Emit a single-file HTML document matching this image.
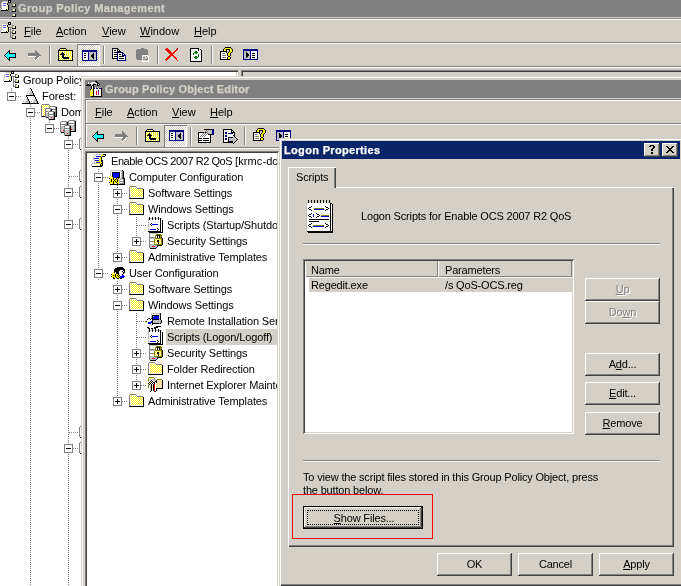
<!DOCTYPE html>
<html><head><meta charset="utf-8">
<style>
*{box-sizing:border-box}
html,body{margin:0;padding:0}
body{width:681px;height:586px;overflow:hidden;position:relative;background:#D4D0C8;font-family:"Liberation Sans",sans-serif;font-size:11px;color:#000}
.a{position:absolute}
.t{position:absolute;white-space:nowrap;line-height:13px;will-change:transform}
.u{text-decoration:underline;text-underline-offset:1px}
.btn{position:absolute;will-change:transform;background:#D4D0C8;box-shadow:inset -1px -1px #404040,inset 1px 1px #fff,inset -2px -2px #808080;text-align:center;line-height:22px;letter-spacing:-0.17px}
.sunk{position:absolute;box-shadow:inset 1px 1px #808080,inset -1px -1px #fff,inset 2px 2px #404040,inset -2px -2px #D4D0C8}
.dis{color:#808080;text-shadow:1px 1px #fff}
.hl{position:absolute;height:1px;background:#808080}
.wl{position:absolute;height:1px;background:#fff}
.dots{position:absolute;background-image:linear-gradient(90deg,#808080 50%,transparent 50%);background-size:2px 1px;height:1px}
.vdots{position:absolute;background-image:linear-gradient(180deg,#808080 50%,transparent 50%);background-size:1px 2px;width:1px}
.box{position:absolute;width:9px;height:9px;border:1px solid #808080;background:#fff}
.box:before{content:"";position:absolute;left:1px;top:3px;width:5px;height:1px;background:#000}
.box.p:after{content:"";position:absolute;left:3px;top:1px;width:1px;height:5px;background:#000}
.vsep{position:absolute;width:2px;border-left:1px solid #808080;border-right:1px solid #fff}
.d{letter-spacing:-0.17px}
.tr .t,.trt{letter-spacing:-0.12px}
svg{position:absolute;shape-rendering:crispEdges}
</style></head><body>

<!-- ===== GPMC background window ===== -->
<div class="a" style="left:0;top:0;width:681px;height:17px;background:#808080"></div>
<div class="t" style="left:18px;top:2px;color:#D4D0C8;font-weight:bold;letter-spacing:0.36px;-webkit-text-stroke:0.25px #D4D0C8">Group Policy Management</div>
<svg style="left:0px;top:0px" width="17" height="17"><path fill="#000000" d="M8 0h3v1h-3zM8 1h1v1h-1zM10 1h1v1h-1zM8 2h3v1h-3zM7 3h1v1h-1zM7 4h1v1h-1zM15 4h1v1h-1zM8 5h1v1h-1zM15 5h1v1h-1zM8 6h1v1h-1zM12 6h4v1h-4zM8 7h1v1h-1zM8 8h1v1h-1zM6 9h1v1h-1zM8 9h1v1h-1zM15 9h1v1h-1zM1 10h7v1h-7zM15 10h1v1h-1zM12 11h4v1h-4zM15 14h1v1h-1zM15 15h1v1h-1zM12 16h4v1h-4z"/><path fill="#C0C0C0" d="M3 1h5v1h-5zM1 3h1v1h-1zM1 4h1v1h-1zM1 5h1v1h-1zM1 6h1v1h-1zM1 7h1v1h-1zM0 8h1v1h-1zM0 9h1v1h-1z"/><path fill="#FFFFFF" d="M9 1h1v1h-1zM2 2h4v1h-4zM2 3h1v1h-1zM2 4h4v1h-4zM2 5h1v1h-1zM2 6h4v1h-4zM2 7h4v1h-4zM2 8h4v1h-4zM1 9h5v1h-5z"/><path fill="#F0F0B0" d="M6 2h2v1h-2zM6 3h1v1h-1zM6 4h1v1h-1zM13 4h2v1h-2zM6 5h2v1h-2zM13 5h2v1h-2zM6 6h2v1h-2zM6 7h2v1h-2zM6 8h2v1h-2zM7 9h1v1h-1zM13 9h2v1h-2zM13 10h2v1h-2zM13 14h2v1h-2zM13 15h2v1h-2z"/><path fill="#6060F0" d="M3 3h3v1h-3zM3 5h3v1h-3z"/><path fill="#808080" d="M12 3h2v1h-2zM12 4h1v1h-1zM9 5h4v1h-4zM10 6h1v1h-1zM10 7h1v1h-1zM10 8h1v1h-1zM12 8h2v1h-2zM10 9h1v1h-1zM12 9h1v1h-1zM10 10h3v1h-3zM10 11h1v1h-1zM10 12h1v1h-1zM10 13h1v1h-1zM12 13h2v1h-2zM10 14h1v1h-1zM12 14h1v1h-1zM10 15h3v1h-3z"/></svg>
<div class="hl" style="left:0;top:18px;width:681px"></div>
<div class="wl" style="left:0;top:19px;width:681px"></div>
<div class="hl" style="left:0;top:42px;width:681px"></div>
<div class="wl" style="left:0;top:43px;width:681px"></div>
<div class="hl" style="left:0;top:66px;width:681px"></div>
<div class="wl" style="left:0;top:67px;width:681px"></div>

<!-- GPMC menu -->
<svg style="left:0px;top:22px" width="17" height="17"><path fill="#000000" d="M8 0h3v1h-3zM8 1h1v1h-1zM10 1h1v1h-1zM8 2h3v1h-3zM7 3h1v1h-1zM7 4h1v1h-1zM15 4h1v1h-1zM8 5h1v1h-1zM15 5h1v1h-1zM8 6h1v1h-1zM12 6h4v1h-4zM8 7h1v1h-1zM8 8h1v1h-1zM6 9h1v1h-1zM8 9h1v1h-1zM15 9h1v1h-1zM1 10h7v1h-7zM15 10h1v1h-1zM12 11h4v1h-4zM15 14h1v1h-1zM15 15h1v1h-1zM12 16h4v1h-4z"/><path fill="#C0C0C0" d="M3 1h5v1h-5zM1 3h1v1h-1zM1 4h1v1h-1zM1 5h1v1h-1zM1 6h1v1h-1zM1 7h1v1h-1zM0 8h1v1h-1zM0 9h1v1h-1z"/><path fill="#FFFFFF" d="M9 1h1v1h-1zM2 2h4v1h-4zM2 3h1v1h-1zM2 4h4v1h-4zM2 5h1v1h-1zM2 6h4v1h-4zM2 7h4v1h-4zM2 8h4v1h-4zM1 9h5v1h-5z"/><path fill="#F0F0B0" d="M6 2h2v1h-2zM6 3h1v1h-1zM6 4h1v1h-1zM13 4h2v1h-2zM6 5h2v1h-2zM13 5h2v1h-2zM6 6h2v1h-2zM6 7h2v1h-2zM6 8h2v1h-2zM7 9h1v1h-1zM13 9h2v1h-2zM13 10h2v1h-2zM13 14h2v1h-2zM13 15h2v1h-2z"/><path fill="#6060F0" d="M3 3h3v1h-3zM3 5h3v1h-3z"/><path fill="#808080" d="M12 3h2v1h-2zM12 4h1v1h-1zM9 5h4v1h-4zM10 6h1v1h-1zM10 7h1v1h-1zM10 8h1v1h-1zM12 8h2v1h-2zM10 9h1v1h-1zM12 9h1v1h-1zM10 10h3v1h-3zM10 11h1v1h-1zM10 12h1v1h-1zM10 13h1v1h-1zM12 13h2v1h-2zM10 14h1v1h-1zM12 14h1v1h-1zM10 15h3v1h-3z"/></svg>
<div class="t" style="left:24px;top:25px"><span class="u">F</span>ile</div>
<div class="t" style="left:56px;top:25px"><span class="u">A</span>ction</div>
<div class="t" style="left:102px;top:25px"><span class="u">V</span>iew</div>
<div class="t" style="left:140px;top:25px"><span class="u">W</span>indow</div>
<div class="t" style="left:194px;top:25px"><span class="u">H</span>elp</div>

<!-- GPMC toolbar -->
<div class="vsep" style="left:49px;top:46px;height:18px"></div>
<div class="vsep" style="left:103px;top:46px;height:18px"></div>
<div class="vsep" style="left:157px;top:46px;height:18px"></div>
<div class="vsep" style="left:211px;top:46px;height:18px"></div>
<div class="a" style="left:77px;top:44px;width:23px;height:22px;box-shadow:inset 1px 1px #808080,inset -1px -1px #fff;background-color:#fff;background-image:linear-gradient(45deg,#D4D0C8 25%,transparent 25%,transparent 75%,#D4D0C8 75%),linear-gradient(45deg,#D4D0C8 25%,transparent 25%,transparent 75%,#D4D0C8 75%);background-size:2px 2px;background-position:0 0,1px 1px"></div>

<svg style="left:4px;top:50px" width="13" height="11"><path fill="#000000" d="M5 0h1v1h-1zM4 1h2v1h-2zM3 2h1v1h-1zM5 2h1v1h-1zM2 3h1v1h-1zM5 3h7v1h-7zM1 4h1v1h-1zM11 4h1v1h-1zM0 5h1v1h-1zM11 5h1v1h-1zM1 6h1v1h-1zM11 6h1v1h-1zM2 7h1v1h-1zM5 7h7v1h-7zM3 8h1v1h-1zM5 8h1v1h-1zM4 9h2v1h-2zM5 10h1v1h-1z"/><path fill="#00FFFF" d="M4 2h1v1h-1zM3 3h2v1h-2zM2 4h9v1h-9zM1 5h10v1h-10zM2 6h9v1h-9zM3 7h2v1h-2zM4 8h1v1h-1z"/></svg><svg style="left:28px;top:50px" width="13" height="11"><path fill="#808080" d="M7 0h1v1h-1zM7 1h2v1h-2zM7 2h3v1h-3zM0 3h11v1h-11zM0 4h12v1h-12zM0 5h13v1h-13zM8 6h3v1h-3zM7 7h3v1h-3zM7 8h2v1h-2zM7 9h1v1h-1z"/><path fill="#FFFFFF" d="M0 6h8v1h-8zM11 6h1v1h-1zM10 7h1v1h-1zM9 8h1v1h-1zM8 9h1v1h-1zM7 10h1v1h-1z"/></svg><svg style="left:58px;top:48px" width="15" height="13"><path fill="#000000" d="M2 0h6v1h-6zM1 1h1v1h-1zM8 1h1v1h-1zM0 2h15v1h-15zM0 3h1v1h-1zM14 3h1v1h-1zM0 4h1v1h-1zM4 4h1v1h-1zM14 4h1v1h-1zM0 5h1v1h-1zM3 5h3v1h-3zM14 5h1v1h-1zM0 6h1v1h-1zM2 6h5v1h-5zM14 6h1v1h-1zM0 7h1v1h-1zM4 7h2v1h-2zM14 7h1v1h-1zM0 8h1v1h-1zM4 8h2v1h-2zM14 8h1v1h-1zM0 9h1v1h-1zM4 9h7v1h-7zM14 9h1v1h-1zM0 10h1v1h-1zM5 10h6v1h-6zM14 10h1v1h-1zM0 11h1v1h-1zM14 11h1v1h-1zM0 12h15v1h-15z"/><path fill="#FFFFFF" d="M2 1h1v1h-1zM4 1h1v1h-1zM6 1h1v1h-1zM1 3h1v1h-1zM3 3h1v1h-1zM5 3h1v1h-1zM7 3h1v1h-1zM9 3h1v1h-1zM11 3h1v1h-1zM13 3h1v1h-1zM2 4h1v1h-1zM5 4h1v1h-1zM7 4h1v1h-1zM9 4h1v1h-1zM11 4h1v1h-1zM13 4h1v1h-1zM1 5h1v1h-1zM7 5h1v1h-1zM9 5h1v1h-1zM11 5h1v1h-1zM13 5h1v1h-1zM7 6h1v1h-1zM9 6h1v1h-1zM11 6h1v1h-1zM13 6h1v1h-1zM1 7h1v1h-1zM3 7h1v1h-1zM7 7h1v1h-1zM9 7h1v1h-1zM11 7h1v1h-1zM13 7h1v1h-1zM2 8h1v1h-1zM6 8h1v1h-1zM8 8h1v1h-1zM10 8h1v1h-1zM12 8h1v1h-1zM1 9h1v1h-1zM3 9h1v1h-1zM12 9h1v1h-1zM2 10h1v1h-1zM4 10h1v1h-1zM11 10h1v1h-1zM13 10h1v1h-1zM1 11h1v1h-1zM3 11h1v1h-1zM5 11h1v1h-1zM7 11h1v1h-1zM9 11h1v1h-1zM11 11h1v1h-1zM13 11h1v1h-1z"/><path fill="#FFFF00" d="M3 1h1v1h-1zM5 1h1v1h-1zM7 1h1v1h-1zM2 3h1v1h-1zM4 3h1v1h-1zM6 3h1v1h-1zM8 3h1v1h-1zM10 3h1v1h-1zM12 3h1v1h-1zM1 4h1v1h-1zM3 4h1v1h-1zM6 4h1v1h-1zM8 4h1v1h-1zM10 4h1v1h-1zM12 4h1v1h-1zM2 5h1v1h-1zM6 5h1v1h-1zM8 5h1v1h-1zM10 5h1v1h-1zM12 5h1v1h-1zM1 6h1v1h-1zM8 6h1v1h-1zM10 6h1v1h-1zM12 6h1v1h-1zM2 7h1v1h-1zM6 7h1v1h-1zM8 7h1v1h-1zM10 7h1v1h-1zM12 7h1v1h-1zM1 8h1v1h-1zM3 8h1v1h-1zM7 8h1v1h-1zM9 8h1v1h-1zM11 8h1v1h-1zM13 8h1v1h-1zM2 9h1v1h-1zM11 9h1v1h-1zM13 9h1v1h-1zM1 10h1v1h-1zM3 10h1v1h-1zM12 10h1v1h-1zM2 11h1v1h-1zM4 11h1v1h-1zM6 11h1v1h-1zM8 11h1v1h-1zM10 11h1v1h-1zM12 11h1v1h-1z"/></svg><svg style="left:82px;top:50px" width="15" height="11"><path fill="#000080" d="M0 0h15v1h-15zM0 1h15v1h-15zM0 2h1v1h-1zM6 2h1v1h-1zM14 2h1v1h-1zM0 3h1v1h-1zM6 3h1v1h-1zM14 3h1v1h-1zM0 4h1v1h-1zM6 4h1v1h-1zM14 4h1v1h-1zM0 5h1v1h-1zM6 5h1v1h-1zM14 5h1v1h-1zM0 6h1v1h-1zM6 6h1v1h-1zM14 6h1v1h-1zM0 7h1v1h-1zM6 7h1v1h-1zM14 7h1v1h-1zM0 8h1v1h-1zM6 8h1v1h-1zM14 8h1v1h-1zM0 9h1v1h-1zM6 9h1v1h-1zM14 9h1v1h-1zM0 10h15v1h-15z"/><path fill="#FFFFFF" d="M1 2h5v1h-5zM1 3h1v1h-1zM4 3h2v1h-2zM1 4h5v1h-5zM1 5h1v1h-1zM4 5h2v1h-2zM1 6h5v1h-5zM1 7h1v1h-1zM4 7h2v1h-2zM1 8h5v1h-5zM1 9h5v1h-5z"/><path fill="#C0C0C0" d="M7 2h7v1h-7zM7 3h4v1h-4zM12 3h2v1h-2zM7 4h3v1h-3zM12 4h2v1h-2zM7 5h2v1h-2zM12 5h2v1h-2zM7 6h2v1h-2zM12 6h2v1h-2zM7 7h3v1h-3zM12 7h2v1h-2zM7 8h4v1h-4zM12 8h2v1h-2zM7 9h7v1h-7z"/><path fill="#000000" d="M2 3h2v1h-2zM11 3h1v1h-1zM10 4h2v1h-2zM2 5h2v1h-2zM9 5h3v1h-3zM9 6h3v1h-3zM2 7h2v1h-2zM10 7h2v1h-2zM11 8h1v1h-1z"/></svg>
<svg style="left:112px;top:48px" width="15" height="13"><path fill="#000000" d="M0 0h6v1h-6zM0 1h1v1h-1zM5 1h2v1h-2zM0 2h1v1h-1zM2 2h2v1h-2zM5 2h1v1h-1zM7 2h1v1h-1zM0 3h1v1h-1zM5 3h4v1h-4zM0 4h1v1h-1zM2 4h3v1h-3zM0 5h1v1h-1zM0 6h1v1h-1zM2 6h3v1h-3zM7 6h2v1h-2zM0 7h1v1h-1zM0 8h1v1h-1zM2 8h3v1h-3zM7 8h5v1h-5zM0 9h1v1h-1zM0 10h5v1h-5zM7 10h5v1h-5z"/><path fill="#FFFFFF" d="M1 1h4v1h-4zM1 2h1v1h-1zM4 2h1v1h-1zM6 2h1v1h-1zM1 3h4v1h-4zM1 4h1v1h-1zM1 5h4v1h-4zM6 5h4v1h-4zM1 6h1v1h-1zM6 6h1v1h-1zM9 6h1v1h-1zM11 6h1v1h-1zM1 7h4v1h-4zM6 7h4v1h-4zM1 8h1v1h-1zM6 8h1v1h-1zM12 8h1v1h-1zM1 9h4v1h-4zM6 9h7v1h-7zM6 10h1v1h-1zM12 10h1v1h-1zM6 11h7v1h-7z"/><path fill="#000080" d="M5 4h6v1h-6zM5 5h1v1h-1zM10 5h2v1h-2zM5 6h1v1h-1zM10 6h1v1h-1zM12 6h1v1h-1zM5 7h1v1h-1zM10 7h4v1h-4zM5 8h1v1h-1zM13 8h1v1h-1zM5 9h1v1h-1zM13 9h1v1h-1zM5 10h1v1h-1zM13 10h1v1h-1zM5 11h1v1h-1zM13 11h1v1h-1zM5 12h9v1h-9z"/></svg><svg style="left:135px;top:48px" width="15" height="14"><path fill="#808080" d="M6 0h3v1h-3zM2 1h10v1h-10zM1 2h12v1h-12zM1 3h12v1h-12zM1 4h12v1h-12zM1 5h12v1h-12zM1 6h12v1h-12zM1 7h6v1h-6zM1 8h6v1h-6zM11 8h1v1h-1zM1 9h6v1h-6zM8 9h2v1h-2zM12 9h1v1h-1zM1 10h6v1h-6zM12 10h1v1h-1zM2 11h5v1h-5zM8 11h5v1h-5z"/><path fill="#FFFFFF" d="M7 7h6v1h-6zM7 8h1v1h-1zM12 8h2v1h-2zM7 9h1v1h-1zM13 9h1v1h-1zM7 10h1v1h-1zM13 10h1v1h-1zM7 11h1v1h-1zM13 11h1v1h-1zM7 12h1v1h-1zM13 12h1v1h-1zM7 13h7v1h-7z"/><path fill="#D4D0C8" d="M8 8h3v1h-3zM10 9h2v1h-2zM8 10h4v1h-4zM8 12h5v1h-5z"/></svg><svg style="left:165px;top:48px" width="14" height="14"><path fill="#FF0000" d="M1 0h2v1h-2zM12 0h1v1h-1zM0 1h4v1h-4zM11 1h2v1h-2zM1 2h4v1h-4zM10 2h2v1h-2zM2 3h4v1h-4zM9 3h2v1h-2zM3 4h4v1h-4zM8 4h2v1h-2zM4 5h5v1h-5zM5 6h3v1h-3zM4 7h5v1h-5zM3 8h3v1h-3zM8 8h2v1h-2zM2 9h3v1h-3zM9 9h2v1h-2zM1 10h3v1h-3zM10 10h2v1h-2zM0 11h3v1h-3zM11 11h1v1h-1zM1 12h1v1h-1zM12 12h1v1h-1z"/></svg><svg style="left:190px;top:48px" width="12" height="14"><path fill="#000000" d="M0 0h9v1h-9zM0 1h1v1h-1zM8 1h1v1h-1zM10 1h1v1h-1zM0 2h1v1h-1zM8 2h1v1h-1zM11 2h1v1h-1zM0 3h1v1h-1zM11 3h1v1h-1zM0 4h1v1h-1zM11 4h1v1h-1zM0 5h1v1h-1zM11 5h1v1h-1zM0 6h1v1h-1zM11 6h1v1h-1zM0 7h1v1h-1zM11 7h1v1h-1zM0 8h1v1h-1zM11 8h1v1h-1zM0 9h1v1h-1zM11 9h1v1h-1zM0 10h1v1h-1zM11 10h1v1h-1zM0 11h1v1h-1zM11 11h1v1h-1zM0 12h1v1h-1zM11 12h1v1h-1zM0 13h12v1h-12z"/><path fill="#FFFFFF" d="M1 1h7v1h-7zM9 1h1v1h-1zM1 2h7v1h-7zM9 2h2v1h-2zM1 3h4v1h-4zM7 3h4v1h-4zM1 4h3v1h-3zM8 4h3v1h-3zM1 5h2v1h-2zM4 5h1v1h-1zM7 5h4v1h-4zM1 6h2v1h-2zM4 6h4v1h-4zM9 6h2v1h-2zM1 7h7v1h-7zM9 7h2v1h-2zM1 8h4v1h-4zM7 8h1v1h-1zM9 8h2v1h-2zM1 9h3v1h-3zM8 9h3v1h-3zM1 10h4v1h-4zM7 10h4v1h-4zM1 11h10v1h-10zM1 12h10v1h-10z"/><path fill="#008000" d="M5 3h2v1h-2zM4 4h4v1h-4zM3 5h1v1h-1zM5 5h2v1h-2zM3 6h1v1h-1zM8 6h1v1h-1zM8 7h1v1h-1zM5 8h2v1h-2zM8 8h1v1h-1zM4 9h4v1h-4zM5 10h2v1h-2z"/></svg><svg style="left:220px;top:47px" width="15" height="13"><path fill="#000000" d="M5 0h6v1h-6zM4 1h1v1h-1zM11 1h1v1h-1zM3 2h1v1h-1zM6 2h4v1h-4zM12 2h1v1h-1zM3 3h1v1h-1zM6 3h1v1h-1zM9 3h1v1h-1zM12 3h1v1h-1zM0 4h7v1h-7zM9 4h1v1h-1zM12 4h1v1h-1zM0 5h1v1h-1zM6 5h1v1h-1zM8 5h1v1h-1zM11 5h1v1h-1zM0 6h1v1h-1zM7 6h1v1h-1zM10 6h1v1h-1zM0 7h1v1h-1zM7 7h1v1h-1zM10 7h1v1h-1zM0 8h1v1h-1zM7 8h1v1h-1zM10 8h1v1h-1zM0 9h1v1h-1zM8 9h2v1h-2zM0 10h1v1h-1zM7 10h1v1h-1zM10 10h1v1h-1zM0 11h1v1h-1zM7 11h1v1h-1zM10 11h1v1h-1zM0 12h10v1h-10z"/><path fill="#FFFF00" d="M5 1h6v1h-6zM4 2h2v1h-2zM10 2h2v1h-2zM4 3h2v1h-2zM10 3h2v1h-2zM10 4h2v1h-2zM9 5h2v1h-2zM8 6h2v1h-2zM8 7h2v1h-2zM8 8h2v1h-2zM8 10h2v1h-2zM8 11h2v1h-2z"/><path fill="#FFFFFF" d="M1 5h5v1h-5zM1 6h1v1h-1zM5 6h2v1h-2zM1 7h6v1h-6zM1 8h1v1h-1zM6 8h1v1h-1zM1 9h7v1h-7zM1 10h1v1h-1zM6 10h1v1h-1zM1 11h6v1h-6z"/><path fill="#808080" d="M2 6h3v1h-3zM2 8h4v1h-4zM2 10h4v1h-4z"/></svg><svg style="left:243px;top:49px" width="15" height="11"><path fill="#000080" d="M0 0h15v1h-15zM0 1h15v1h-15zM0 2h1v1h-1zM7 2h1v1h-1zM14 2h1v1h-1zM0 3h1v1h-1zM7 3h1v1h-1zM14 3h1v1h-1zM0 4h1v1h-1zM7 4h1v1h-1zM14 4h1v1h-1zM0 5h1v1h-1zM7 5h1v1h-1zM14 5h1v1h-1zM0 6h1v1h-1zM7 6h1v1h-1zM14 6h1v1h-1zM0 7h1v1h-1zM7 7h1v1h-1zM14 7h1v1h-1zM0 8h1v1h-1zM7 8h1v1h-1zM14 8h1v1h-1zM0 9h1v1h-1zM7 9h1v1h-1zM14 9h1v1h-1zM0 10h15v1h-15z"/><path fill="#C0C0C0" d="M1 2h6v1h-6zM1 3h2v1h-2zM4 3h3v1h-3zM1 4h2v1h-2zM5 4h2v1h-2zM1 5h2v1h-2zM6 5h1v1h-1zM1 6h2v1h-2zM6 6h1v1h-1zM1 7h2v1h-2zM5 7h2v1h-2zM1 8h2v1h-2zM4 8h3v1h-3zM1 9h6v1h-6z"/><path fill="#FFFFFF" d="M8 2h6v1h-6zM8 3h6v1h-6zM8 4h1v1h-1zM12 4h2v1h-2zM8 5h6v1h-6zM8 6h1v1h-1zM12 6h2v1h-2zM8 7h6v1h-6zM8 8h1v1h-1zM12 8h2v1h-2zM8 9h6v1h-6z"/><path fill="#000000" d="M3 3h1v1h-1zM3 4h2v1h-2zM9 4h3v1h-3zM3 5h3v1h-3zM3 6h3v1h-3zM9 6h3v1h-3zM3 7h2v1h-2zM3 8h1v1h-1zM9 8h3v1h-3z"/></svg>
<!-- GPMC left pane -->
<div class="a" style="left:0;top:70px;width:238px;height:516px;background:#fff;box-shadow:inset 0 1px #808080,inset 0 2px #404040,inset -1px 0 #fff,inset -2px 0 #D4D0C8"></div>
<!-- GPMC right pane -->
<div class="a" style="left:241px;top:70px;width:440px;height:516px;background:#D4D0C8;box-shadow:inset 1px 1px #808080,inset 2px 2px #404040"></div>

<div class="t trt" style="left:23px;top:74px">Group Policy Management</div>
<div class="t" style="left:42px;top:90px">Forest:</div>
<div class="t trt" style="left:61px;top:106px">Domains</div>

<svg style="left:3px;top:71px" width="17" height="17"><path fill="#000000" d="M8 0h3v1h-3zM8 1h1v1h-1zM10 1h1v1h-1zM8 2h3v1h-3zM7 3h1v1h-1zM7 4h1v1h-1zM15 4h1v1h-1zM8 5h1v1h-1zM15 5h1v1h-1zM8 6h1v1h-1zM12 6h4v1h-4zM8 7h1v1h-1zM8 8h1v1h-1zM6 9h1v1h-1zM8 9h1v1h-1zM15 9h1v1h-1zM1 10h7v1h-7zM15 10h1v1h-1zM12 11h4v1h-4zM15 14h1v1h-1zM15 15h1v1h-1zM12 16h4v1h-4z"/><path fill="#C0C0C0" d="M3 1h5v1h-5zM1 3h1v1h-1zM1 4h1v1h-1zM1 5h1v1h-1zM1 6h1v1h-1zM1 7h1v1h-1zM0 8h1v1h-1zM0 9h1v1h-1z"/><path fill="#FFFFFF" d="M9 1h1v1h-1zM2 2h4v1h-4zM2 3h1v1h-1zM2 4h4v1h-4zM2 5h1v1h-1zM2 6h4v1h-4zM2 7h4v1h-4zM2 8h4v1h-4zM1 9h5v1h-5z"/><path fill="#F0F0B0" d="M6 2h2v1h-2zM6 3h1v1h-1zM6 4h1v1h-1zM13 4h2v1h-2zM6 5h2v1h-2zM13 5h2v1h-2zM6 6h2v1h-2zM6 7h2v1h-2zM6 8h2v1h-2zM7 9h1v1h-1zM13 9h2v1h-2zM13 10h2v1h-2zM13 14h2v1h-2zM13 15h2v1h-2z"/><path fill="#6060F0" d="M3 3h3v1h-3zM3 5h3v1h-3z"/><path fill="#808080" d="M12 3h2v1h-2zM12 4h1v1h-1zM9 5h4v1h-4zM10 6h1v1h-1zM10 7h1v1h-1zM10 8h1v1h-1zM12 8h2v1h-2zM10 9h1v1h-1zM12 9h1v1h-1zM10 10h3v1h-3zM10 11h1v1h-1zM10 12h1v1h-1zM10 13h1v1h-1zM12 13h2v1h-2zM10 14h1v1h-1zM12 14h1v1h-1zM10 15h3v1h-3z"/></svg><svg style="left:22px;top:88px" width="17" height="16"><path fill="#000000" d="M8 0h1v1h-1zM9 1h1v1h-1zM9 2h1v1h-1zM10 3h1v1h-1zM10 4h1v1h-1zM11 5h1v1h-1zM11 6h1v1h-1zM4 7h9v1h-9zM4 8h1v1h-1zM12 8h1v1h-1zM5 9h1v1h-1zM13 9h1v1h-1zM5 10h1v1h-1zM13 10h1v1h-1zM6 11h1v1h-1zM14 11h1v1h-1zM6 12h1v1h-1zM14 12h1v1h-1zM7 13h1v1h-1zM15 13h1v1h-1zM7 14h1v1h-1zM15 14h1v1h-1zM0 15h17v1h-17z"/><path fill="#C0C0C0" d="M7 1h1v1h-1zM6 3h1v1h-1zM8 3h2v1h-2zM8 4h2v1h-2zM5 5h1v1h-1zM7 5h4v1h-4zM7 6h4v1h-4zM3 9h1v1h-1zM11 9h1v1h-1zM2 11h1v1h-1zM4 11h2v1h-2zM10 11h1v1h-1zM12 11h2v1h-2zM4 12h2v1h-2zM12 12h2v1h-2zM1 13h1v1h-1zM3 13h4v1h-4zM9 13h1v1h-1zM11 13h4v1h-4zM3 14h4v1h-4zM11 14h4v1h-4z"/><path fill="#FFFFFF" d="M8 1h1v1h-1zM7 2h2v1h-2zM7 3h1v1h-1zM6 4h2v1h-2zM6 5h1v1h-1zM5 6h2v1h-2zM4 9h1v1h-1zM12 9h1v1h-1zM3 10h2v1h-2zM11 10h2v1h-2zM3 11h1v1h-1zM11 11h1v1h-1zM2 12h2v1h-2zM10 12h2v1h-2zM2 13h1v1h-1zM10 13h1v1h-1zM1 14h2v1h-2zM9 14h2v1h-2z"/></svg><svg style="left:41px;top:104px" width="17" height="17"><path fill="#808080" d="M1 0h7v1h-7zM0 1h1v1h-1zM8 1h1v1h-1zM0 2h1v1h-1zM9 2h6v1h-6zM0 3h1v1h-1zM8 3h1v1h-1zM14 3h1v1h-1zM0 4h1v1h-1zM5 4h5v1h-5zM14 4h1v1h-1zM0 5h1v1h-1zM4 5h1v1h-1zM9 5h1v1h-1zM11 5h4v1h-4zM0 6h1v1h-1zM4 6h1v1h-1zM9 6h1v1h-1zM14 6h1v1h-1zM0 7h1v1h-1zM4 7h3v1h-3zM8 7h5v1h-5zM14 7h1v1h-1zM0 8h1v1h-1zM4 8h1v1h-1zM7 8h1v1h-1zM12 8h1v1h-1zM14 8h1v1h-1zM0 9h1v1h-1zM4 9h1v1h-1zM7 9h1v1h-1zM12 9h1v1h-1zM14 9h1v1h-1zM0 10h1v1h-1zM4 10h1v1h-1zM7 10h6v1h-6zM14 10h1v1h-1zM0 11h1v1h-1zM4 11h1v1h-1zM7 11h1v1h-1zM12 11h1v1h-1zM14 11h1v1h-1zM0 12h1v1h-1zM4 12h1v1h-1zM7 12h1v1h-1zM12 12h1v1h-1zM7 13h1v1h-1zM12 13h1v1h-1zM7 14h1v1h-1zM12 14h1v1h-1z"/><path fill="#FFFFFF" d="M1 1h1v1h-1zM3 1h1v1h-1zM5 1h1v1h-1zM7 1h1v1h-1zM2 2h1v1h-1zM4 2h1v1h-1zM6 2h1v1h-1zM1 3h1v1h-1zM3 3h5v1h-5zM9 3h5v1h-5zM1 4h2v1h-2zM11 4h3v1h-3zM1 5h1v1h-1zM3 5h1v1h-1zM5 5h4v1h-4zM1 6h2v1h-2zM5 6h4v1h-4zM11 6h3v1h-3zM1 7h1v1h-1zM3 7h1v1h-1zM1 8h2v1h-2zM5 8h2v1h-2zM8 8h4v1h-4zM1 9h1v1h-1zM3 9h1v1h-1zM8 9h4v1h-4zM1 10h2v1h-2zM1 11h1v1h-1zM3 11h1v1h-1zM8 11h4v1h-4z"/><path fill="#FFFF00" d="M2 1h1v1h-1zM4 1h1v1h-1zM6 1h1v1h-1zM1 2h1v1h-1zM3 2h1v1h-1zM5 2h1v1h-1zM7 2h1v1h-1zM2 3h1v1h-1zM3 4h1v1h-1zM2 5h1v1h-1zM3 6h1v1h-1zM2 7h1v1h-1zM3 8h1v1h-1zM2 9h1v1h-1zM3 10h1v1h-1zM2 11h1v1h-1z"/><path fill="#C0C0C0" d="M8 2h1v1h-1zM15 2h1v1h-1zM4 4h1v1h-1zM10 4h1v1h-1zM7 7h1v1h-1zM13 7h1v1h-1zM5 9h2v1h-2zM5 10h2v1h-2zM5 11h2v1h-2zM5 12h2v1h-2zM8 12h4v1h-4zM4 13h1v1h-1zM8 13h2v1h-2zM11 13h1v1h-1zM8 14h4v1h-4zM7 15h1v1h-1z"/><path fill="#000000" d="M15 3h1v1h-1zM15 4h1v1h-1zM10 5h1v1h-1zM15 5h1v1h-1zM10 6h1v1h-1zM15 6h1v1h-1zM15 7h1v1h-1zM13 8h1v1h-1zM15 8h1v1h-1zM13 9h1v1h-1zM15 9h1v1h-1zM13 10h1v1h-1zM15 10h1v1h-1zM13 11h1v1h-1zM15 11h1v1h-1zM1 12h3v1h-3zM13 12h3v1h-3zM5 13h2v1h-2zM13 13h1v1h-1zM13 14h1v1h-1zM8 15h6v1h-6z"/><path fill="#FF0000" d="M10 13h1v1h-1z"/></svg><svg style="left:60px;top:120px" width="17" height="17"><path fill="#C0C0C0" d="M8 0h1v1h-1zM15 0h1v1h-1zM0 1h1v1h-1zM7 1h1v1h-1zM4 5h1v1h-1zM10 5h4v1h-4zM1 6h3v1h-3zM11 6h3v1h-3zM1 7h3v1h-3zM11 7h3v1h-3zM1 8h3v1h-3zM11 8h3v1h-3zM1 9h3v1h-3zM12 9h2v1h-2zM1 10h2v1h-2zM5 10h4v1h-4zM11 10h3v1h-3zM1 11h3v1h-3zM5 11h4v1h-4zM0 12h1v1h-1zM5 12h4v1h-4zM5 13h2v1h-2zM8 13h1v1h-1zM5 14h4v1h-4zM4 15h1v1h-1z"/><path fill="#808080" d="M9 0h6v1h-6zM1 1h6v1h-6zM8 1h1v1h-1zM14 1h1v1h-1zM0 2h1v1h-1zM6 2h1v1h-1zM8 2h1v1h-1zM14 2h1v1h-1zM0 3h1v1h-1zM6 3h1v1h-1zM8 3h7v1h-7zM0 4h7v1h-7zM8 4h1v1h-1zM14 4h1v1h-1zM0 5h1v1h-1zM5 5h5v1h-5zM14 5h1v1h-1zM0 6h1v1h-1zM4 6h1v1h-1zM9 6h1v1h-1zM14 6h1v1h-1zM0 7h1v1h-1zM4 7h1v1h-1zM9 7h1v1h-1zM14 7h1v1h-1zM0 8h1v1h-1zM4 8h6v1h-6zM14 8h1v1h-1zM0 9h1v1h-1zM4 9h1v1h-1zM9 9h1v1h-1zM14 9h1v1h-1zM0 10h1v1h-1zM4 10h1v1h-1zM9 10h1v1h-1zM14 10h1v1h-1zM0 11h1v1h-1zM4 11h1v1h-1zM9 11h1v1h-1zM4 12h1v1h-1zM9 12h1v1h-1zM4 13h1v1h-1zM9 13h1v1h-1zM4 14h1v1h-1zM9 14h1v1h-1z"/><path fill="#FFFFFF" d="M9 1h5v1h-5zM1 2h5v1h-5zM9 2h5v1h-5zM1 3h5v1h-5zM9 4h5v1h-5zM1 5h3v1h-3zM5 6h4v1h-4zM5 7h4v1h-4zM5 9h4v1h-4z"/><path fill="#000000" d="M15 1h1v1h-1zM7 2h1v1h-1zM15 2h1v1h-1zM7 3h1v1h-1zM15 3h1v1h-1zM7 4h1v1h-1zM15 4h1v1h-1zM15 5h1v1h-1zM10 6h1v1h-1zM15 6h1v1h-1zM10 7h1v1h-1zM15 7h1v1h-1zM10 8h1v1h-1zM15 8h1v1h-1zM10 9h1v1h-1zM15 9h1v1h-1zM10 10h1v1h-1zM15 10h1v1h-1zM10 11h6v1h-6zM1 12h3v1h-3zM10 12h1v1h-1zM10 13h1v1h-1zM10 14h1v1h-1zM5 15h6v1h-6z"/><path fill="#FF0000" d="M11 9h1v1h-1zM3 10h1v1h-1zM7 13h1v1h-1z"/></svg>
<svg style="left:78px;top:138px" width="3" height="12"><path fill="#808080" d="M2 0h1v1h-1zM1 1h1v1h-1zM1 2h1v1h-1zM1 3h1v1h-1zM1 4h1v1h-1zM1 5h1v1h-1zM1 6h1v1h-1zM1 7h1v1h-1zM1 8h1v1h-1zM1 9h1v1h-1zM1 10h1v1h-1z"/><path fill="#000000" d="M2 11h1v1h-1z"/></svg><svg style="left:78px;top:170px" width="3" height="12"><path fill="#808080" d="M2 0h1v1h-1zM1 1h1v1h-1zM1 2h1v1h-1zM1 3h1v1h-1zM1 4h1v1h-1zM1 5h1v1h-1zM1 6h1v1h-1zM1 7h1v1h-1zM1 8h1v1h-1zM1 9h1v1h-1zM1 10h1v1h-1z"/><path fill="#000000" d="M2 11h1v1h-1z"/></svg><svg style="left:78px;top:186px" width="3" height="12"><path fill="#808080" d="M2 0h1v1h-1zM1 1h1v1h-1zM1 2h1v1h-1zM1 3h1v1h-1zM1 4h1v1h-1zM1 5h1v1h-1zM1 6h1v1h-1zM1 7h1v1h-1zM1 8h1v1h-1zM1 9h1v1h-1zM1 10h1v1h-1z"/><path fill="#000000" d="M2 11h1v1h-1z"/></svg><svg style="left:78px;top:218px" width="3" height="12"><path fill="#808080" d="M2 0h1v1h-1zM1 1h1v1h-1zM1 2h1v1h-1zM1 3h1v1h-1zM1 4h1v1h-1zM1 5h1v1h-1zM1 6h1v1h-1zM1 7h1v1h-1zM1 8h1v1h-1zM1 9h1v1h-1zM1 10h1v1h-1z"/><path fill="#000000" d="M2 11h1v1h-1z"/></svg><svg style="left:78px;top:426px" width="3" height="12"><path fill="#808080" d="M2 0h1v1h-1zM1 1h1v1h-1zM1 2h1v1h-1zM1 3h1v1h-1zM1 4h1v1h-1zM1 5h1v1h-1zM1 6h1v1h-1zM1 7h1v1h-1zM1 8h1v1h-1zM1 9h1v1h-1zM1 10h1v1h-1z"/><path fill="#000000" d="M2 11h1v1h-1z"/></svg><svg style="left:78px;top:442px" width="3" height="12"><path fill="#808080" d="M2 0h1v1h-1zM1 1h1v1h-1zM1 2h1v1h-1zM1 3h1v1h-1zM1 4h1v1h-1zM1 5h1v1h-1zM1 6h1v1h-1zM1 7h1v1h-1zM1 8h1v1h-1zM1 9h1v1h-1zM1 10h1v1h-1z"/><path fill="#000000" d="M2 11h1v1h-1z"/></svg>
<!-- tree lines GPMC -->
<div class="vdots" style="left:11px;top:88px;height:4px"></div>
<div class="box" style="left:7px;top:92px"></div>
<div class="dots" style="left:16px;top:96px;width:5px"></div>
<div class="vdots" style="left:30px;top:104px;height:4px"></div>
<div class="box" style="left:26px;top:108px"></div>
<div class="dots" style="left:35px;top:112px;width:5px"></div>
<div class="vdots" style="left:49px;top:120px;height:4px"></div>
<div class="box" style="left:45px;top:124px"></div>
<div class="dots" style="left:54px;top:128px;width:5px"></div>
<div class="vdots" style="left:30px;top:118px;height:468px"></div>
<div class="vdots" style="left:68px;top:136px;height:450px"></div>
<div class="box" style="left:64px;top:140px"></div>
<div class="dots" style="left:73px;top:144px;width:6px"></div>
<div class="dots" style="left:69px;top:176px;width:10px"></div>
<div class="box" style="left:64px;top:188px"></div>
<div class="dots" style="left:73px;top:192px;width:6px"></div>
<div class="box" style="left:64px;top:220px"></div>
<div class="dots" style="left:73px;top:224px;width:6px"></div>
<div class="dots" style="left:69px;top:432px;width:10px"></div>
<div class="box" style="left:64px;top:444px"></div>
<div class="dots" style="left:73px;top:448px;width:6px"></div>

<!-- ===== GPOE window ===== -->
<div class="a" style="left:81px;top:76px;width:600px;height:510px;background:#D4D0C8;box-shadow:inset 1px 1px #D4D0C8,inset 2px 2px #fff"></div>
<div class="a" style="left:85px;top:80px;width:596px;height:18px;background:#808080"></div>
<svg style="left:86px;top:81px" width="16" height="16"><path fill="#000000" d="M9 0h2v1h-2zM10 1h2v1h-2zM11 2h2v1h-2zM1 3h2v1h-2zM4 3h1v1h-1zM7 3h3v1h-3zM11 3h1v1h-1zM13 3h1v1h-1zM0 4h5v1h-5zM6 4h2v1h-2zM11 4h2v1h-2zM5 5h1v1h-1zM7 5h1v1h-1zM5 6h1v1h-1zM7 6h1v1h-1zM5 7h1v1h-1zM7 7h1v1h-1zM15 7h1v1h-1zM4 8h1v1h-1zM7 8h1v1h-1zM15 8h1v1h-1zM7 9h1v1h-1zM15 9h1v1h-1zM7 10h1v1h-1zM15 10h1v1h-1zM7 11h1v1h-1zM15 11h1v1h-1zM7 12h1v1h-1zM15 12h1v1h-1zM7 13h1v1h-1zM15 13h1v1h-1zM7 14h1v1h-1zM15 14h1v1h-1zM5 15h11v1h-11z"/><path fill="#FFFFFF" d="M2 1h1v1h-1zM6 1h3v1h-3zM2 2h1v1h-1zM4 2h3v1h-3zM9 2h2v1h-2zM12 3h1v1h-1zM6 5h1v1h-1zM6 6h1v1h-1zM6 7h1v1h-1zM9 7h1v1h-1zM12 7h1v1h-1zM8 8h7v1h-7zM5 9h1v1h-1zM8 9h4v1h-4zM13 9h2v1h-2zM5 10h1v1h-1zM8 10h2v1h-2zM11 10h1v1h-1zM13 10h2v1h-2zM8 11h2v1h-2zM11 11h1v1h-1zM13 11h2v1h-2zM8 12h2v1h-2zM11 12h1v1h-1zM13 12h2v1h-2zM8 13h2v1h-2zM11 13h1v1h-1zM13 13h2v1h-2zM8 14h7v1h-7z"/><path fill="#C0C0C0" d="M5 1h1v1h-1zM9 1h1v1h-1zM7 2h2v1h-2zM5 3h2v1h-2zM5 4h1v1h-1zM9 6h1v1h-1zM11 6h1v1h-1zM13 6h1v1h-1z"/><path fill="#000080" d="M8 7h1v1h-1zM10 7h2v1h-2zM13 7h2v1h-2z"/><path fill="#FFFF00" d="M5 8h2v1h-2zM4 9h1v1h-1zM6 9h1v1h-1zM4 10h1v1h-1zM6 10h1v1h-1zM4 11h3v1h-3zM4 12h3v1h-3zM4 13h3v1h-3zM4 14h3v1h-3z"/><path fill="#800080" d="M12 9h1v1h-1zM12 10h1v1h-1zM12 11h1v1h-1zM12 12h1v1h-1zM12 13h1v1h-1z"/><path fill="#FF0000" d="M10 10h1v1h-1zM10 11h1v1h-1zM10 12h1v1h-1zM10 13h1v1h-1z"/></svg>
<div class="t" style="left:105px;top:83px;color:#D4D0C8;font-weight:bold;letter-spacing:0.15px;-webkit-text-stroke:0.25px #D4D0C8">Group Policy Object Editor</div>
<div class="a" style="left:85px;top:99px;width:596px;height:50px;box-shadow:inset 1px 1px #808080,inset 2px 2px #fff"></div>
<div class="hl" style="left:86px;top:123px;width:595px"></div>
<div class="wl" style="left:86px;top:124px;width:595px"></div>
<div class="hl" style="left:86px;top:147px;width:595px"></div>
<div class="wl" style="left:85px;top:148px;width:596px"></div>
<div class="t" style="left:95px;top:106px"><span class="u">F</span>ile</div>
<div class="t" style="left:127px;top:106px"><span class="u">A</span>ction</div>
<div class="t" style="left:172px;top:106px"><span class="u">V</span>iew</div>
<div class="t" style="left:210px;top:106px"><span class="u">H</span>elp</div>
<div class="vsep" style="left:136px;top:127px;height:18px"></div>
<div class="vsep" style="left:190px;top:127px;height:18px"></div>
<div class="vsep" style="left:244px;top:127px;height:18px"></div>
<div class="a" style="left:164px;top:125px;width:23px;height:22px;box-shadow:inset 1px 1px #808080,inset -1px -1px #fff;background-color:#fff;background-image:linear-gradient(45deg,#D4D0C8 25%,transparent 25%,transparent 75%,#D4D0C8 75%),linear-gradient(45deg,#D4D0C8 25%,transparent 25%,transparent 75%,#D4D0C8 75%);background-size:2px 2px;background-position:0 0,1px 1px"></div>

<svg style="left:92px;top:131px" width="13" height="11"><path fill="#000000" d="M5 0h1v1h-1zM4 1h2v1h-2zM3 2h1v1h-1zM5 2h1v1h-1zM2 3h1v1h-1zM5 3h7v1h-7zM1 4h1v1h-1zM11 4h1v1h-1zM0 5h1v1h-1zM11 5h1v1h-1zM1 6h1v1h-1zM11 6h1v1h-1zM2 7h1v1h-1zM5 7h7v1h-7zM3 8h1v1h-1zM5 8h1v1h-1zM4 9h2v1h-2zM5 10h1v1h-1z"/><path fill="#00FFFF" d="M4 2h1v1h-1zM3 3h2v1h-2zM2 4h9v1h-9zM1 5h10v1h-10zM2 6h9v1h-9zM3 7h2v1h-2zM4 8h1v1h-1z"/></svg><svg style="left:115px;top:131px" width="13" height="11"><path fill="#808080" d="M7 0h1v1h-1zM7 1h2v1h-2zM7 2h3v1h-3zM0 3h11v1h-11zM0 4h12v1h-12zM0 5h13v1h-13zM8 6h3v1h-3zM7 7h3v1h-3zM7 8h2v1h-2zM7 9h1v1h-1z"/><path fill="#FFFFFF" d="M0 6h8v1h-8zM11 6h1v1h-1zM10 7h1v1h-1zM9 8h1v1h-1zM8 9h1v1h-1zM7 10h1v1h-1z"/></svg><svg style="left:145px;top:129px" width="15" height="13"><path fill="#000000" d="M2 0h6v1h-6zM1 1h1v1h-1zM8 1h1v1h-1zM0 2h15v1h-15zM0 3h1v1h-1zM14 3h1v1h-1zM0 4h1v1h-1zM4 4h1v1h-1zM14 4h1v1h-1zM0 5h1v1h-1zM3 5h3v1h-3zM14 5h1v1h-1zM0 6h1v1h-1zM2 6h5v1h-5zM14 6h1v1h-1zM0 7h1v1h-1zM4 7h2v1h-2zM14 7h1v1h-1zM0 8h1v1h-1zM4 8h2v1h-2zM14 8h1v1h-1zM0 9h1v1h-1zM4 9h7v1h-7zM14 9h1v1h-1zM0 10h1v1h-1zM5 10h6v1h-6zM14 10h1v1h-1zM0 11h1v1h-1zM14 11h1v1h-1zM0 12h15v1h-15z"/><path fill="#FFFFFF" d="M2 1h1v1h-1zM4 1h1v1h-1zM6 1h1v1h-1zM1 3h1v1h-1zM3 3h1v1h-1zM5 3h1v1h-1zM7 3h1v1h-1zM9 3h1v1h-1zM11 3h1v1h-1zM13 3h1v1h-1zM2 4h1v1h-1zM5 4h1v1h-1zM7 4h1v1h-1zM9 4h1v1h-1zM11 4h1v1h-1zM13 4h1v1h-1zM1 5h1v1h-1zM7 5h1v1h-1zM9 5h1v1h-1zM11 5h1v1h-1zM13 5h1v1h-1zM7 6h1v1h-1zM9 6h1v1h-1zM11 6h1v1h-1zM13 6h1v1h-1zM1 7h1v1h-1zM3 7h1v1h-1zM7 7h1v1h-1zM9 7h1v1h-1zM11 7h1v1h-1zM13 7h1v1h-1zM2 8h1v1h-1zM6 8h1v1h-1zM8 8h1v1h-1zM10 8h1v1h-1zM12 8h1v1h-1zM1 9h1v1h-1zM3 9h1v1h-1zM12 9h1v1h-1zM2 10h1v1h-1zM4 10h1v1h-1zM11 10h1v1h-1zM13 10h1v1h-1zM1 11h1v1h-1zM3 11h1v1h-1zM5 11h1v1h-1zM7 11h1v1h-1zM9 11h1v1h-1zM11 11h1v1h-1zM13 11h1v1h-1z"/><path fill="#FFFF00" d="M3 1h1v1h-1zM5 1h1v1h-1zM7 1h1v1h-1zM2 3h1v1h-1zM4 3h1v1h-1zM6 3h1v1h-1zM8 3h1v1h-1zM10 3h1v1h-1zM12 3h1v1h-1zM1 4h1v1h-1zM3 4h1v1h-1zM6 4h1v1h-1zM8 4h1v1h-1zM10 4h1v1h-1zM12 4h1v1h-1zM2 5h1v1h-1zM6 5h1v1h-1zM8 5h1v1h-1zM10 5h1v1h-1zM12 5h1v1h-1zM1 6h1v1h-1zM8 6h1v1h-1zM10 6h1v1h-1zM12 6h1v1h-1zM2 7h1v1h-1zM6 7h1v1h-1zM8 7h1v1h-1zM10 7h1v1h-1zM12 7h1v1h-1zM1 8h1v1h-1zM3 8h1v1h-1zM7 8h1v1h-1zM9 8h1v1h-1zM11 8h1v1h-1zM13 8h1v1h-1zM2 9h1v1h-1zM11 9h1v1h-1zM13 9h1v1h-1zM1 10h1v1h-1zM3 10h1v1h-1zM12 10h1v1h-1zM2 11h1v1h-1zM4 11h1v1h-1zM6 11h1v1h-1zM8 11h1v1h-1zM10 11h1v1h-1zM12 11h1v1h-1z"/></svg><svg style="left:169px;top:130px" width="15" height="11"><path fill="#000080" d="M0 0h15v1h-15zM0 1h15v1h-15zM0 2h1v1h-1zM6 2h1v1h-1zM14 2h1v1h-1zM0 3h1v1h-1zM6 3h1v1h-1zM14 3h1v1h-1zM0 4h1v1h-1zM6 4h1v1h-1zM14 4h1v1h-1zM0 5h1v1h-1zM6 5h1v1h-1zM14 5h1v1h-1zM0 6h1v1h-1zM6 6h1v1h-1zM14 6h1v1h-1zM0 7h1v1h-1zM6 7h1v1h-1zM14 7h1v1h-1zM0 8h1v1h-1zM6 8h1v1h-1zM14 8h1v1h-1zM0 9h1v1h-1zM6 9h1v1h-1zM14 9h1v1h-1zM0 10h15v1h-15z"/><path fill="#FFFFFF" d="M1 2h5v1h-5zM1 3h1v1h-1zM4 3h2v1h-2zM1 4h5v1h-5zM1 5h1v1h-1zM4 5h2v1h-2zM1 6h5v1h-5zM1 7h1v1h-1zM4 7h2v1h-2zM1 8h5v1h-5zM1 9h5v1h-5z"/><path fill="#C0C0C0" d="M7 2h7v1h-7zM7 3h4v1h-4zM12 3h2v1h-2zM7 4h3v1h-3zM12 4h2v1h-2zM7 5h2v1h-2zM12 5h2v1h-2zM7 6h2v1h-2zM12 6h2v1h-2zM7 7h3v1h-3zM12 7h2v1h-2zM7 8h4v1h-4zM12 8h2v1h-2zM7 9h7v1h-7z"/><path fill="#000000" d="M2 3h2v1h-2zM11 3h1v1h-1zM10 4h2v1h-2zM2 5h2v1h-2zM9 5h3v1h-3zM9 6h3v1h-3zM2 7h2v1h-2zM10 7h2v1h-2zM11 8h1v1h-1z"/></svg><svg style="left:197px;top:128px" width="18" height="15"><path fill="#000000" d="M7 1h8v1h-8zM1 4h6v1h-6zM8 4h1v1h-1zM1 5h1v1h-1zM1 6h1v1h-1zM11 6h4v1h-4zM1 7h1v1h-1zM13 7h1v1h-1zM1 8h1v1h-1zM13 8h1v1h-1zM1 9h1v1h-1zM13 9h1v1h-1zM1 10h4v1h-4zM6 10h6v1h-6zM13 10h1v1h-1zM1 11h1v1h-1zM13 11h1v1h-1zM1 12h4v1h-4zM6 12h6v1h-6zM13 12h1v1h-1zM1 13h1v1h-1zM13 13h1v1h-1zM1 14h13v1h-13z"/><path fill="#000080" d="M15 1h2v1h-2zM15 2h2v1h-2zM15 3h2v1h-2zM15 4h2v1h-2zM15 5h2v1h-2zM15 6h2v1h-2z"/><path fill="#808080" d="M9 2h1v1h-1zM8 3h1v1h-1zM10 3h1v1h-1zM7 4h1v1h-1zM9 4h1v1h-1zM6 5h1v1h-1zM8 5h1v1h-1zM10 5h1v1h-1zM5 6h1v1h-1zM7 6h1v1h-1zM9 6h1v1h-1zM4 7h1v1h-1zM6 7h1v1h-1zM8 7h1v1h-1zM3 8h1v1h-1zM5 8h1v1h-1zM7 8h1v1h-1z"/><path fill="#C0C0C0" d="M10 2h5v1h-5zM11 3h4v1h-4zM10 4h5v1h-5zM11 5h4v1h-4z"/><path fill="#FFFFFF" d="M2 5h4v1h-4zM7 5h1v1h-1zM9 5h1v1h-1zM2 6h3v1h-3zM6 6h1v1h-1zM8 6h1v1h-1zM10 6h1v1h-1zM2 7h2v1h-2zM5 7h1v1h-1zM7 7h1v1h-1zM9 7h4v1h-4zM2 8h1v1h-1zM4 8h1v1h-1zM6 8h1v1h-1zM8 8h5v1h-5zM2 9h11v1h-11zM5 10h1v1h-1zM12 10h1v1h-1zM2 11h11v1h-11zM5 12h1v1h-1zM12 12h1v1h-1zM2 13h11v1h-11z"/></svg><svg style="left:222px;top:128px" width="17" height="16"><path fill="#000000" d="M1 1h9v1h-9zM1 2h1v1h-1zM9 2h2v1h-2zM1 3h1v1h-1zM9 3h1v1h-1zM11 3h1v1h-1zM1 4h1v1h-1zM9 4h4v1h-4zM1 5h1v1h-1zM12 5h1v1h-1zM1 6h1v1h-1zM12 6h1v1h-1zM1 7h1v1h-1zM11 7h2v1h-2zM1 8h1v1h-1zM12 8h1v1h-1zM1 9h1v1h-1zM6 9h5v1h-5zM13 9h1v1h-1zM1 10h1v1h-1zM6 10h1v1h-1zM14 10h1v1h-1zM1 11h1v1h-1zM6 11h1v1h-1zM15 11h1v1h-1zM1 12h1v1h-1zM6 12h1v1h-1zM14 12h1v1h-1zM1 13h1v1h-1zM6 13h5v1h-5zM13 13h1v1h-1zM1 14h10v1h-10zM12 14h1v1h-1zM11 15h1v1h-1z"/><path fill="#FFFFFF" d="M2 2h7v1h-7zM2 3h7v1h-7zM10 3h1v1h-1zM2 4h1v1h-1zM5 4h4v1h-4zM2 5h1v1h-1zM5 5h1v1h-1zM11 5h1v1h-1zM2 6h10v1h-10zM2 7h1v1h-1zM5 7h6v1h-6zM2 8h1v1h-1zM5 8h6v1h-6zM2 9h4v1h-4zM2 10h1v1h-1zM5 10h1v1h-1zM2 11h1v1h-1zM5 11h1v1h-1zM2 12h4v1h-4zM2 13h4v1h-4z"/><path fill="#000080" d="M3 4h2v1h-2zM3 5h2v1h-2zM6 5h5v1h-5zM3 7h2v1h-2zM3 8h2v1h-2zM3 10h2v1h-2zM3 11h2v1h-2z"/><path fill="#C0C0C0" d="M11 8h1v1h-1zM11 9h2v1h-2zM7 10h7v1h-7zM7 11h8v1h-8zM7 12h7v1h-7zM11 13h2v1h-2zM11 14h1v1h-1z"/></svg><svg style="left:253px;top:128px" width="15" height="13"><path fill="#000000" d="M5 0h6v1h-6zM4 1h1v1h-1zM11 1h1v1h-1zM3 2h1v1h-1zM6 2h4v1h-4zM12 2h1v1h-1zM3 3h1v1h-1zM6 3h1v1h-1zM9 3h1v1h-1zM12 3h1v1h-1zM0 4h7v1h-7zM9 4h1v1h-1zM12 4h1v1h-1zM0 5h1v1h-1zM6 5h1v1h-1zM8 5h1v1h-1zM11 5h1v1h-1zM0 6h1v1h-1zM7 6h1v1h-1zM10 6h1v1h-1zM0 7h1v1h-1zM7 7h1v1h-1zM10 7h1v1h-1zM0 8h1v1h-1zM7 8h1v1h-1zM10 8h1v1h-1zM0 9h1v1h-1zM8 9h2v1h-2zM0 10h1v1h-1zM7 10h1v1h-1zM10 10h1v1h-1zM0 11h1v1h-1zM7 11h1v1h-1zM10 11h1v1h-1zM0 12h10v1h-10z"/><path fill="#FFFF00" d="M5 1h6v1h-6zM4 2h2v1h-2zM10 2h2v1h-2zM4 3h2v1h-2zM10 3h2v1h-2zM10 4h2v1h-2zM9 5h2v1h-2zM8 6h2v1h-2zM8 7h2v1h-2zM8 8h2v1h-2zM8 10h2v1h-2zM8 11h2v1h-2z"/><path fill="#FFFFFF" d="M1 5h5v1h-5zM1 6h1v1h-1zM5 6h2v1h-2zM1 7h6v1h-6zM1 8h1v1h-1zM6 8h1v1h-1zM1 9h7v1h-7zM1 10h1v1h-1zM6 10h1v1h-1zM1 11h6v1h-6z"/><path fill="#808080" d="M2 6h3v1h-3zM2 8h4v1h-4zM2 10h4v1h-4z"/></svg><svg style="left:276px;top:130px" width="15" height="11"><path fill="#000080" d="M0 0h15v1h-15zM0 1h15v1h-15zM0 2h1v1h-1zM7 2h1v1h-1zM14 2h1v1h-1zM0 3h1v1h-1zM7 3h1v1h-1zM14 3h1v1h-1zM0 4h1v1h-1zM7 4h1v1h-1zM14 4h1v1h-1zM0 5h1v1h-1zM7 5h1v1h-1zM14 5h1v1h-1zM0 6h1v1h-1zM7 6h1v1h-1zM14 6h1v1h-1zM0 7h1v1h-1zM7 7h1v1h-1zM14 7h1v1h-1zM0 8h1v1h-1zM7 8h1v1h-1zM14 8h1v1h-1zM0 9h1v1h-1zM7 9h1v1h-1zM14 9h1v1h-1zM0 10h15v1h-15z"/><path fill="#C0C0C0" d="M1 2h6v1h-6zM1 3h2v1h-2zM4 3h3v1h-3zM1 4h2v1h-2zM5 4h2v1h-2zM1 5h2v1h-2zM6 5h1v1h-1zM1 6h2v1h-2zM6 6h1v1h-1zM1 7h2v1h-2zM5 7h2v1h-2zM1 8h2v1h-2zM4 8h3v1h-3zM1 9h6v1h-6z"/><path fill="#FFFFFF" d="M8 2h6v1h-6zM8 3h6v1h-6zM8 4h1v1h-1zM12 4h2v1h-2zM8 5h6v1h-6zM8 6h1v1h-1zM12 6h2v1h-2zM8 7h6v1h-6zM8 8h1v1h-1zM12 8h2v1h-2zM8 9h6v1h-6z"/><path fill="#000000" d="M3 3h1v1h-1zM3 4h2v1h-2zM9 4h3v1h-3zM3 5h3v1h-3zM3 6h3v1h-3zM9 6h3v1h-3zM3 7h2v1h-2zM3 8h1v1h-1zM9 8h3v1h-3z"/></svg>
<!-- GPOE tree pane -->
<div class="sunk" style="left:85px;top:151px;width:194px;height:445px;background:#fff"></div>
<div class="a tr" style="left:87px;top:153px;width:190px;height:433px;overflow:hidden">
  <!-- coordinates relative to (87,153) -->
  <div class="t" style="left:24px;top:2px;letter-spacing:-0.44px">Enable OCS 2007 R2 QoS</div><div class="t" style="left:148px;top:2px;letter-spacing:0.1px">[krmc-dc.krmc.local] Policy</div>
  <div class="t" style="left:42px;top:18px">Computer Configuration</div>
  <div class="t" style="left:61px;top:34px">Software Settings</div>
  <div class="t" style="left:61px;top:50px">Windows Settings</div>
  <div class="t" style="left:80px;top:66px">Scripts (Startup/Shutdown)</div>
  <div class="t" style="left:80px;top:82px">Security Settings</div>
  <div class="t" style="left:61px;top:98px">Administrative Templates</div>
  <div class="t" style="left:42px;top:114px">User Configuration</div>
  <div class="t" style="left:61px;top:130px">Software Settings</div>
  <div class="t" style="left:61px;top:146px">Windows Settings</div>
  <div class="t" style="left:80px;top:162px">Remote Installation Services</div>
  <div class="a" style="left:79px;top:176px;width:111px;height:16px;background:#D4D0C8"></div>
  <div class="t" style="left:80px;top:178px">Scripts (Logon/Logoff)</div>
  <div class="t" style="left:80px;top:194px">Security Settings</div>
  <div class="t" style="left:80px;top:210px">Folder Redirection</div>
  <div class="t" style="left:80px;top:226px">Internet Explorer Maintenance</div>
  <div class="t" style="left:61px;top:242px">Administrative Templates</div>
  <svg style="left:3px;top:1px" width="16" height="13"><path fill="#C0C0C0" d="M6 0h6v1h-6zM5 1h1v1h-1zM4 2h1v1h-1zM3 3h1v1h-1zM3 4h1v1h-1zM3 5h1v1h-1zM4 6h1v1h-1zM4 7h1v1h-1zM4 8h1v1h-1zM2 9h4v1h-4zM1 10h1v1h-1zM1 11h1v1h-1z"/><path fill="#FFFF00" d="M12 0h1v1h-1zM11 1h2v1h-2zM11 2h1v1h-1zM10 3h1v1h-1zM10 4h1v1h-1zM9 5h2v1h-2zM9 6h2v1h-2zM6 7h5v1h-5zM10 8h2v1h-2zM6 9h5v1h-5zM11 10h1v1h-1z"/><path fill="#000000" d="M13 0h3v1h-3zM15 1h1v1h-1zM12 2h3v1h-3zM11 3h1v1h-1zM11 4h1v1h-1zM11 5h1v1h-1zM11 6h2v1h-2zM11 7h2v1h-2zM12 8h1v1h-1zM11 9h2v1h-2zM10 10h1v1h-1zM12 10h1v1h-1zM10 11h3v1h-3zM2 12h10v1h-10z"/><path fill="#FFFFFF" d="M6 1h5v1h-5zM13 1h2v1h-2zM5 2h1v1h-1zM4 3h6v1h-6zM9 4h1v1h-1zM4 5h5v1h-5zM5 7h1v1h-1zM5 8h1v1h-1zM2 10h8v1h-8zM2 11h8v1h-8z"/><path fill="#0000FF" d="M6 2h5v1h-5zM4 4h5v1h-5zM5 6h4v1h-4zM6 8h4v1h-4z"/></svg><svg style="left:22px;top:17px" width="16" height="15"><path fill="#C0C0C0" d="M2 0h11v1h-11zM1 1h1v1h-1zM12 1h1v1h-1zM1 2h1v1h-1zM12 2h1v1h-1zM1 3h1v1h-1zM12 3h1v1h-1zM1 4h1v1h-1zM12 4h1v1h-1zM1 5h1v1h-1zM12 5h1v1h-1zM12 6h1v1h-1zM12 7h1v1h-1zM11 8h1v1h-1zM10 9h4v1h-4zM10 10h1v1h-1zM10 11h1v1h-1zM10 12h1v1h-1zM10 13h1v1h-1z"/><path fill="#000000" d="M13 0h1v1h-1zM14 1h1v1h-1zM3 2h8v1h-8zM14 2h1v1h-1zM3 3h1v1h-1zM10 3h1v1h-1zM14 3h1v1h-1zM3 4h1v1h-1zM10 4h1v1h-1zM14 4h1v1h-1zM3 5h1v1h-1zM10 5h1v1h-1zM14 5h1v1h-1zM3 6h1v1h-1zM10 6h1v1h-1zM14 6h1v1h-1zM4 7h1v1h-1zM8 7h3v1h-3zM14 7h1v1h-1zM0 8h1v1h-1zM4 8h1v1h-1zM7 8h1v1h-1zM9 8h1v1h-1zM14 8h2v1h-2zM2 9h1v1h-1zM4 9h1v1h-1zM6 9h1v1h-1zM8 9h1v1h-1zM15 9h1v1h-1zM2 10h1v1h-1zM5 10h1v1h-1zM8 10h1v1h-1zM15 10h1v1h-1zM2 11h1v1h-1zM4 11h1v1h-1zM6 11h1v1h-1zM8 11h1v1h-1zM15 11h1v1h-1zM0 12h1v1h-1zM4 12h1v1h-1zM7 12h1v1h-1zM15 12h1v1h-1zM4 13h1v1h-1zM8 13h1v1h-1zM15 13h1v1h-1zM1 14h15v1h-15z"/><path fill="#FFFFFF" d="M2 1h10v1h-10zM2 2h1v1h-1zM11 2h1v1h-1zM2 3h1v1h-1zM11 3h1v1h-1zM2 4h1v1h-1zM11 4h1v1h-1zM2 5h1v1h-1zM11 5h1v1h-1zM11 6h1v1h-1zM2 7h1v1h-1zM11 7h1v1h-1zM6 8h1v1h-1zM10 8h1v1h-1zM11 10h3v1h-3zM11 12h3v1h-3z"/><path fill="#808080" d="M13 1h1v1h-1zM13 2h1v1h-1zM13 3h1v1h-1zM13 4h1v1h-1zM13 5h1v1h-1zM13 6h1v1h-1zM13 7h1v1h-1zM12 8h2v1h-2zM14 9h1v1h-1zM14 10h1v1h-1zM11 11h4v1h-4zM14 12h1v1h-1zM11 13h4v1h-4z"/><path fill="#0000FF" d="M4 3h6v1h-6zM4 4h6v1h-6zM4 5h6v1h-6zM4 6h6v1h-6zM5 7h3v1h-3z"/><path fill="#FFFF00" d="M0 6h1v1h-1zM2 6h1v1h-1zM1 7h1v1h-1zM3 7h1v1h-1zM1 8h3v1h-3zM5 8h1v1h-1zM8 8h1v1h-1zM1 9h1v1h-1zM3 9h1v1h-1zM5 9h1v1h-1zM7 9h1v1h-1zM9 9h1v1h-1zM0 10h2v1h-2zM3 10h2v1h-2zM6 10h2v1h-2zM9 10h1v1h-1zM1 11h1v1h-1zM3 11h1v1h-1zM5 11h1v1h-1zM7 11h1v1h-1zM9 11h1v1h-1zM1 12h3v1h-3zM5 12h2v1h-2zM8 12h2v1h-2zM1 13h1v1h-1zM3 13h1v1h-1zM5 13h1v1h-1zM7 13h1v1h-1zM9 13h1v1h-1z"/></svg><svg style="left:42px;top:33px" width="15" height="13"><path fill="#808080" d="M1 0h6v1h-6zM0 1h1v1h-1zM7 1h1v1h-1zM0 2h1v1h-1zM8 2h6v1h-6zM0 3h1v1h-1zM0 4h1v1h-1zM0 5h1v1h-1zM0 6h1v1h-1zM0 7h1v1h-1zM0 8h1v1h-1zM0 9h1v1h-1zM0 10h1v1h-1zM0 11h1v1h-1z"/><path fill="#FFFFFF" d="M1 1h6v1h-6zM1 2h1v1h-1zM3 2h1v1h-1zM5 2h1v1h-1zM7 2h1v1h-1zM1 3h2v1h-2zM4 3h1v1h-1zM6 3h1v1h-1zM8 3h1v1h-1zM10 3h1v1h-1zM12 3h1v1h-1zM1 4h1v1h-1zM3 4h1v1h-1zM5 4h1v1h-1zM7 4h1v1h-1zM9 4h1v1h-1zM11 4h1v1h-1zM13 4h1v1h-1zM1 5h2v1h-2zM4 5h1v1h-1zM6 5h1v1h-1zM8 5h1v1h-1zM10 5h1v1h-1zM12 5h1v1h-1zM1 6h1v1h-1zM3 6h1v1h-1zM5 6h1v1h-1zM7 6h1v1h-1zM9 6h1v1h-1zM11 6h1v1h-1zM13 6h1v1h-1zM1 7h2v1h-2zM4 7h1v1h-1zM6 7h1v1h-1zM8 7h1v1h-1zM10 7h1v1h-1zM12 7h1v1h-1zM1 8h1v1h-1zM3 8h1v1h-1zM5 8h1v1h-1zM7 8h1v1h-1zM9 8h1v1h-1zM11 8h1v1h-1zM13 8h1v1h-1zM1 9h2v1h-2zM4 9h1v1h-1zM6 9h1v1h-1zM8 9h1v1h-1zM10 9h1v1h-1zM12 9h1v1h-1zM1 10h1v1h-1zM3 10h1v1h-1zM5 10h1v1h-1zM7 10h1v1h-1zM9 10h1v1h-1zM11 10h1v1h-1zM13 10h1v1h-1zM1 11h13v1h-13z"/><path fill="#FFFF00" d="M2 2h1v1h-1zM4 2h1v1h-1zM6 2h1v1h-1zM3 3h1v1h-1zM5 3h1v1h-1zM7 3h1v1h-1zM9 3h1v1h-1zM11 3h1v1h-1zM13 3h1v1h-1zM2 4h1v1h-1zM4 4h1v1h-1zM6 4h1v1h-1zM8 4h1v1h-1zM10 4h1v1h-1zM12 4h1v1h-1zM3 5h1v1h-1zM5 5h1v1h-1zM7 5h1v1h-1zM9 5h1v1h-1zM11 5h1v1h-1zM13 5h1v1h-1zM2 6h1v1h-1zM4 6h1v1h-1zM6 6h1v1h-1zM8 6h1v1h-1zM10 6h1v1h-1zM12 6h1v1h-1zM3 7h1v1h-1zM5 7h1v1h-1zM7 7h1v1h-1zM9 7h1v1h-1zM11 7h1v1h-1zM13 7h1v1h-1zM2 8h1v1h-1zM4 8h1v1h-1zM6 8h1v1h-1zM8 8h1v1h-1zM10 8h1v1h-1zM12 8h1v1h-1zM3 9h1v1h-1zM5 9h1v1h-1zM7 9h1v1h-1zM9 9h1v1h-1zM11 9h1v1h-1zM13 9h1v1h-1zM2 10h1v1h-1zM4 10h1v1h-1zM6 10h1v1h-1zM8 10h1v1h-1zM10 10h1v1h-1zM12 10h1v1h-1z"/><path fill="#000000" d="M14 3h1v1h-1zM14 4h1v1h-1zM14 5h1v1h-1zM14 6h1v1h-1zM14 7h1v1h-1zM14 8h1v1h-1zM14 9h1v1h-1zM14 10h1v1h-1zM14 11h1v1h-1zM0 12h15v1h-15z"/></svg><svg style="left:42px;top:49px" width="15" height="13"><path fill="#808080" d="M1 0h6v1h-6zM0 1h1v1h-1zM7 1h1v1h-1zM0 2h1v1h-1zM8 2h6v1h-6zM0 3h1v1h-1zM0 4h1v1h-1zM0 5h1v1h-1zM0 6h1v1h-1zM0 7h1v1h-1zM0 8h1v1h-1zM0 9h1v1h-1zM0 10h1v1h-1zM0 11h1v1h-1z"/><path fill="#FFFFFF" d="M1 1h6v1h-6zM1 2h1v1h-1zM3 2h1v1h-1zM5 2h1v1h-1zM7 2h1v1h-1zM1 3h2v1h-2zM4 3h1v1h-1zM6 3h1v1h-1zM8 3h1v1h-1zM10 3h1v1h-1zM12 3h1v1h-1zM1 4h1v1h-1zM3 4h1v1h-1zM5 4h1v1h-1zM7 4h1v1h-1zM9 4h1v1h-1zM11 4h1v1h-1zM13 4h1v1h-1zM1 5h2v1h-2zM4 5h1v1h-1zM6 5h1v1h-1zM8 5h1v1h-1zM10 5h1v1h-1zM12 5h1v1h-1zM1 6h1v1h-1zM3 6h1v1h-1zM5 6h1v1h-1zM7 6h1v1h-1zM9 6h1v1h-1zM11 6h1v1h-1zM13 6h1v1h-1zM1 7h2v1h-2zM4 7h1v1h-1zM6 7h1v1h-1zM8 7h1v1h-1zM10 7h1v1h-1zM12 7h1v1h-1zM1 8h1v1h-1zM3 8h1v1h-1zM5 8h1v1h-1zM7 8h1v1h-1zM9 8h1v1h-1zM11 8h1v1h-1zM13 8h1v1h-1zM1 9h2v1h-2zM4 9h1v1h-1zM6 9h1v1h-1zM8 9h1v1h-1zM10 9h1v1h-1zM12 9h1v1h-1zM1 10h1v1h-1zM3 10h1v1h-1zM5 10h1v1h-1zM7 10h1v1h-1zM9 10h1v1h-1zM11 10h1v1h-1zM13 10h1v1h-1zM1 11h13v1h-13z"/><path fill="#FFFF00" d="M2 2h1v1h-1zM4 2h1v1h-1zM6 2h1v1h-1zM3 3h1v1h-1zM5 3h1v1h-1zM7 3h1v1h-1zM9 3h1v1h-1zM11 3h1v1h-1zM13 3h1v1h-1zM2 4h1v1h-1zM4 4h1v1h-1zM6 4h1v1h-1zM8 4h1v1h-1zM10 4h1v1h-1zM12 4h1v1h-1zM3 5h1v1h-1zM5 5h1v1h-1zM7 5h1v1h-1zM9 5h1v1h-1zM11 5h1v1h-1zM13 5h1v1h-1zM2 6h1v1h-1zM4 6h1v1h-1zM6 6h1v1h-1zM8 6h1v1h-1zM10 6h1v1h-1zM12 6h1v1h-1zM3 7h1v1h-1zM5 7h1v1h-1zM7 7h1v1h-1zM9 7h1v1h-1zM11 7h1v1h-1zM13 7h1v1h-1zM2 8h1v1h-1zM4 8h1v1h-1zM6 8h1v1h-1zM8 8h1v1h-1zM10 8h1v1h-1zM12 8h1v1h-1zM3 9h1v1h-1zM5 9h1v1h-1zM7 9h1v1h-1zM9 9h1v1h-1zM11 9h1v1h-1zM13 9h1v1h-1zM2 10h1v1h-1zM4 10h1v1h-1zM6 10h1v1h-1zM8 10h1v1h-1zM10 10h1v1h-1zM12 10h1v1h-1z"/><path fill="#000000" d="M14 3h1v1h-1zM14 4h1v1h-1zM14 5h1v1h-1zM14 6h1v1h-1zM14 7h1v1h-1zM14 8h1v1h-1zM14 9h1v1h-1zM14 10h1v1h-1zM14 11h1v1h-1zM0 12h15v1h-15z"/></svg><svg style="left:60px;top:64px" width="16" height="16"><path fill="#000000" d="M2 0h1v1h-1zM5 0h1v1h-1zM8 0h1v1h-1zM11 0h1v1h-1zM2 1h1v1h-1zM5 1h1v1h-1zM8 1h1v1h-1zM11 1h1v1h-1zM13 1h1v1h-1zM2 2h1v1h-1zM5 2h1v1h-1zM8 2h1v1h-1zM11 2h1v1h-1zM13 2h1v1h-1zM13 3h1v1h-1zM15 3h1v1h-1zM13 4h1v1h-1zM15 4h1v1h-1zM13 5h1v1h-1zM15 5h1v1h-1zM4 6h1v1h-1zM13 6h1v1h-1zM15 6h1v1h-1zM3 7h1v1h-1zM13 7h1v1h-1zM15 7h1v1h-1zM4 8h1v1h-1zM13 8h1v1h-1zM15 8h1v1h-1zM13 9h1v1h-1zM15 9h1v1h-1zM13 10h1v1h-1zM15 10h1v1h-1zM10 11h1v1h-1zM13 11h1v1h-1zM15 11h1v1h-1zM11 12h1v1h-1zM13 12h1v1h-1zM15 12h1v1h-1zM10 13h1v1h-1zM13 13h1v1h-1zM15 13h1v1h-1zM1 14h13v1h-13zM15 14h1v1h-1zM2 15h14v1h-14z"/><path fill="#C0C0C0" d="M1 1h1v1h-1zM3 1h2v1h-2zM6 1h2v1h-2zM9 1h2v1h-2zM12 1h1v1h-1zM1 2h1v1h-1zM1 3h1v1h-1zM1 4h1v1h-1zM1 5h1v1h-1zM1 6h1v1h-1zM1 7h1v1h-1zM1 8h1v1h-1zM1 9h1v1h-1zM1 10h1v1h-1zM1 11h1v1h-1zM1 12h1v1h-1zM1 13h1v1h-1z"/><path fill="#FFFFFF" d="M3 2h2v1h-2zM6 2h2v1h-2zM9 2h2v1h-2zM12 2h1v1h-1zM14 2h1v1h-1zM2 3h11v1h-11zM14 3h1v1h-1zM2 4h11v1h-11zM14 4h1v1h-1zM2 5h11v1h-11zM14 5h1v1h-1zM2 6h2v1h-2zM5 6h8v1h-8zM14 6h1v1h-1zM2 7h1v1h-1zM4 7h1v1h-1zM11 7h2v1h-2zM14 7h1v1h-1zM2 8h2v1h-2zM5 8h8v1h-8zM14 8h1v1h-1zM2 9h11v1h-11zM14 9h1v1h-1zM2 10h11v1h-11zM14 10h1v1h-1zM2 11h8v1h-8zM11 11h2v1h-2zM14 11h1v1h-1zM2 12h1v1h-1zM9 12h2v1h-2zM12 12h1v1h-1zM14 12h1v1h-1zM2 13h8v1h-8zM11 13h2v1h-2zM14 13h1v1h-1zM14 14h1v1h-1z"/><path fill="#0000FF" d="M5 7h6v1h-6zM3 12h6v1h-6z"/></svg><svg style="left:62px;top:80px" width="14" height="16"><path fill="#C0C0C0" d="M0 0h9v1h-9zM1 5h5v1h-5zM1 11h4v1h-4zM1 12h7v1h-7zM1 13h2v1h-2zM6 13h2v1h-2zM1 14h6v1h-6z"/><path fill="#808080" d="M0 1h1v1h-1zM0 2h1v1h-1zM0 3h1v1h-1zM0 4h6v1h-6zM0 5h1v1h-1zM0 6h1v1h-1zM0 7h1v1h-1zM0 8h5v1h-5zM0 9h1v1h-1zM0 10h1v1h-1zM0 11h1v1h-1zM0 12h1v1h-1zM0 13h1v1h-1zM0 14h1v1h-1z"/><path fill="#FFFFFF" d="M1 1h6v1h-6zM1 2h5v1h-5zM1 3h5v1h-5zM7 3h1v1h-1zM7 4h1v1h-1zM1 6h4v1h-4zM6 6h1v1h-1zM8 6h1v1h-1zM10 6h1v1h-1zM1 7h4v1h-4zM7 7h1v1h-1zM11 7h1v1h-1zM6 8h1v1h-1zM10 8h1v1h-1zM1 9h4v1h-4zM7 9h1v1h-1zM11 9h1v1h-1zM1 10h4v1h-4zM6 10h1v1h-1zM8 10h1v1h-1zM10 10h1v1h-1z"/><path fill="#808000" d="M7 1h5v1h-5zM6 2h2v1h-2zM11 2h2v1h-2zM6 3h1v1h-1zM11 3h2v1h-2zM6 4h1v1h-1zM11 4h1v1h-1zM6 5h7v1h-7zM5 6h1v1h-1zM12 6h1v1h-1zM5 7h1v1h-1zM12 7h1v1h-1zM5 8h1v1h-1zM12 8h1v1h-1zM5 9h1v1h-1zM12 9h1v1h-1zM5 10h1v1h-1zM12 10h1v1h-1zM5 11h8v1h-8z"/><path fill="#000000" d="M8 2h3v1h-3zM8 3h1v1h-1zM10 3h1v1h-1zM8 4h1v1h-1zM10 4h1v1h-1zM12 4h1v1h-1zM13 5h1v1h-1zM13 6h1v1h-1zM8 7h2v1h-2zM13 7h1v1h-1zM8 8h2v1h-2zM13 8h1v1h-1zM9 9h1v1h-1zM13 9h1v1h-1zM9 10h1v1h-1zM13 10h1v1h-1zM13 11h1v1h-1zM8 12h5v1h-5zM8 13h1v1h-1zM7 14h1v1h-1zM1 15h6v1h-6z"/><path fill="#FFFF00" d="M7 6h1v1h-1zM9 6h1v1h-1zM11 6h1v1h-1zM6 7h1v1h-1zM10 7h1v1h-1zM7 8h1v1h-1zM11 8h1v1h-1zM6 9h1v1h-1zM8 9h1v1h-1zM10 9h1v1h-1zM7 10h1v1h-1zM11 10h1v1h-1z"/><path fill="#FF0000" d="M3 13h3v1h-3z"/></svg><svg style="left:42px;top:97px" width="15" height="13"><path fill="#808080" d="M1 0h6v1h-6zM0 1h1v1h-1zM7 1h1v1h-1zM0 2h1v1h-1zM8 2h6v1h-6zM0 3h1v1h-1zM0 4h1v1h-1zM0 5h1v1h-1zM0 6h1v1h-1zM0 7h1v1h-1zM0 8h1v1h-1zM0 9h1v1h-1zM0 10h1v1h-1zM0 11h1v1h-1z"/><path fill="#FFFFFF" d="M1 1h6v1h-6zM1 2h1v1h-1zM3 2h1v1h-1zM5 2h1v1h-1zM7 2h1v1h-1zM1 3h2v1h-2zM4 3h1v1h-1zM6 3h1v1h-1zM8 3h1v1h-1zM10 3h1v1h-1zM12 3h1v1h-1zM1 4h1v1h-1zM3 4h1v1h-1zM5 4h1v1h-1zM7 4h1v1h-1zM9 4h1v1h-1zM11 4h1v1h-1zM13 4h1v1h-1zM1 5h2v1h-2zM4 5h1v1h-1zM6 5h1v1h-1zM8 5h1v1h-1zM10 5h1v1h-1zM12 5h1v1h-1zM1 6h1v1h-1zM3 6h1v1h-1zM5 6h1v1h-1zM7 6h1v1h-1zM9 6h1v1h-1zM11 6h1v1h-1zM13 6h1v1h-1zM1 7h2v1h-2zM4 7h1v1h-1zM6 7h1v1h-1zM8 7h1v1h-1zM10 7h1v1h-1zM12 7h1v1h-1zM1 8h1v1h-1zM3 8h1v1h-1zM5 8h1v1h-1zM7 8h1v1h-1zM9 8h1v1h-1zM11 8h1v1h-1zM13 8h1v1h-1zM1 9h2v1h-2zM4 9h1v1h-1zM6 9h1v1h-1zM8 9h1v1h-1zM10 9h1v1h-1zM12 9h1v1h-1zM1 10h1v1h-1zM3 10h1v1h-1zM5 10h1v1h-1zM7 10h1v1h-1zM9 10h1v1h-1zM11 10h1v1h-1zM13 10h1v1h-1zM1 11h13v1h-13z"/><path fill="#FFFF00" d="M2 2h1v1h-1zM4 2h1v1h-1zM6 2h1v1h-1zM3 3h1v1h-1zM5 3h1v1h-1zM7 3h1v1h-1zM9 3h1v1h-1zM11 3h1v1h-1zM13 3h1v1h-1zM2 4h1v1h-1zM4 4h1v1h-1zM6 4h1v1h-1zM8 4h1v1h-1zM10 4h1v1h-1zM12 4h1v1h-1zM3 5h1v1h-1zM5 5h1v1h-1zM7 5h1v1h-1zM9 5h1v1h-1zM11 5h1v1h-1zM13 5h1v1h-1zM2 6h1v1h-1zM4 6h1v1h-1zM6 6h1v1h-1zM8 6h1v1h-1zM10 6h1v1h-1zM12 6h1v1h-1zM3 7h1v1h-1zM5 7h1v1h-1zM7 7h1v1h-1zM9 7h1v1h-1zM11 7h1v1h-1zM13 7h1v1h-1zM2 8h1v1h-1zM4 8h1v1h-1zM6 8h1v1h-1zM8 8h1v1h-1zM10 8h1v1h-1zM12 8h1v1h-1zM3 9h1v1h-1zM5 9h1v1h-1zM7 9h1v1h-1zM9 9h1v1h-1zM11 9h1v1h-1zM13 9h1v1h-1zM2 10h1v1h-1zM4 10h1v1h-1zM6 10h1v1h-1zM8 10h1v1h-1zM10 10h1v1h-1zM12 10h1v1h-1z"/><path fill="#000000" d="M14 3h1v1h-1zM14 4h1v1h-1zM14 5h1v1h-1zM14 6h1v1h-1zM14 7h1v1h-1zM14 8h1v1h-1zM14 9h1v1h-1zM14 10h1v1h-1zM14 11h1v1h-1zM0 12h15v1h-15z"/></svg>
  <svg style="left:22px;top:114px" width="16" height="12"><path fill="#000000" d="M8 0h6v1h-6zM6 1h9v1h-9zM5 2h11v1h-11zM5 3h6v1h-6zM14 3h2v1h-2zM5 4h5v1h-5zM15 4h1v1h-1zM5 5h1v1h-1zM7 5h3v1h-3zM14 5h2v1h-2zM7 6h3v1h-3zM14 6h1v1h-1zM2 7h1v1h-1zM6 7h1v1h-1zM9 7h1v1h-1zM13 7h1v1h-1zM4 8h1v1h-1zM6 8h1v1h-1zM8 8h1v1h-1zM10 8h1v1h-1zM2 9h1v1h-1zM6 9h1v1h-1zM9 9h1v1h-1zM4 10h1v1h-1zM7 10h1v1h-1zM10 10h1v1h-1zM4 11h2v1h-2zM8 11h2v1h-2zM11 11h2v1h-2z"/><path fill="#FFFFFF" d="M11 3h3v1h-3zM10 4h3v1h-3zM14 4h1v1h-1zM6 5h1v1h-1zM10 5h4v1h-4zM6 6h1v1h-1zM10 6h4v1h-4zM10 7h3v1h-3zM11 8h2v1h-2z"/><path fill="#0000FF" d="M13 4h1v1h-1zM13 8h2v1h-2zM11 9h5v1h-5zM11 10h4v1h-4z"/><path fill="#FFFF00" d="M4 5h1v1h-1zM3 6h1v1h-1zM5 6h1v1h-1zM3 7h3v1h-3zM7 7h2v1h-2zM3 8h1v1h-1zM5 8h1v1h-1zM7 8h1v1h-1zM9 8h1v1h-1zM3 9h3v1h-3zM7 9h2v1h-2zM10 9h1v1h-1zM3 10h1v1h-1zM5 10h2v1h-2zM8 10h2v1h-2z"/></svg><svg style="left:42px;top:129px" width="15" height="13"><path fill="#808080" d="M1 0h6v1h-6zM0 1h1v1h-1zM7 1h1v1h-1zM0 2h1v1h-1zM8 2h6v1h-6zM0 3h1v1h-1zM0 4h1v1h-1zM0 5h1v1h-1zM0 6h1v1h-1zM0 7h1v1h-1zM0 8h1v1h-1zM0 9h1v1h-1zM0 10h1v1h-1zM0 11h1v1h-1z"/><path fill="#FFFFFF" d="M1 1h6v1h-6zM1 2h1v1h-1zM3 2h1v1h-1zM5 2h1v1h-1zM7 2h1v1h-1zM1 3h2v1h-2zM4 3h1v1h-1zM6 3h1v1h-1zM8 3h1v1h-1zM10 3h1v1h-1zM12 3h1v1h-1zM1 4h1v1h-1zM3 4h1v1h-1zM5 4h1v1h-1zM7 4h1v1h-1zM9 4h1v1h-1zM11 4h1v1h-1zM13 4h1v1h-1zM1 5h2v1h-2zM4 5h1v1h-1zM6 5h1v1h-1zM8 5h1v1h-1zM10 5h1v1h-1zM12 5h1v1h-1zM1 6h1v1h-1zM3 6h1v1h-1zM5 6h1v1h-1zM7 6h1v1h-1zM9 6h1v1h-1zM11 6h1v1h-1zM13 6h1v1h-1zM1 7h2v1h-2zM4 7h1v1h-1zM6 7h1v1h-1zM8 7h1v1h-1zM10 7h1v1h-1zM12 7h1v1h-1zM1 8h1v1h-1zM3 8h1v1h-1zM5 8h1v1h-1zM7 8h1v1h-1zM9 8h1v1h-1zM11 8h1v1h-1zM13 8h1v1h-1zM1 9h2v1h-2zM4 9h1v1h-1zM6 9h1v1h-1zM8 9h1v1h-1zM10 9h1v1h-1zM12 9h1v1h-1zM1 10h1v1h-1zM3 10h1v1h-1zM5 10h1v1h-1zM7 10h1v1h-1zM9 10h1v1h-1zM11 10h1v1h-1zM13 10h1v1h-1zM1 11h13v1h-13z"/><path fill="#FFFF00" d="M2 2h1v1h-1zM4 2h1v1h-1zM6 2h1v1h-1zM3 3h1v1h-1zM5 3h1v1h-1zM7 3h1v1h-1zM9 3h1v1h-1zM11 3h1v1h-1zM13 3h1v1h-1zM2 4h1v1h-1zM4 4h1v1h-1zM6 4h1v1h-1zM8 4h1v1h-1zM10 4h1v1h-1zM12 4h1v1h-1zM3 5h1v1h-1zM5 5h1v1h-1zM7 5h1v1h-1zM9 5h1v1h-1zM11 5h1v1h-1zM13 5h1v1h-1zM2 6h1v1h-1zM4 6h1v1h-1zM6 6h1v1h-1zM8 6h1v1h-1zM10 6h1v1h-1zM12 6h1v1h-1zM3 7h1v1h-1zM5 7h1v1h-1zM7 7h1v1h-1zM9 7h1v1h-1zM11 7h1v1h-1zM13 7h1v1h-1zM2 8h1v1h-1zM4 8h1v1h-1zM6 8h1v1h-1zM8 8h1v1h-1zM10 8h1v1h-1zM12 8h1v1h-1zM3 9h1v1h-1zM5 9h1v1h-1zM7 9h1v1h-1zM9 9h1v1h-1zM11 9h1v1h-1zM13 9h1v1h-1zM2 10h1v1h-1zM4 10h1v1h-1zM6 10h1v1h-1zM8 10h1v1h-1zM10 10h1v1h-1zM12 10h1v1h-1z"/><path fill="#000000" d="M14 3h1v1h-1zM14 4h1v1h-1zM14 5h1v1h-1zM14 6h1v1h-1zM14 7h1v1h-1zM14 8h1v1h-1zM14 9h1v1h-1zM14 10h1v1h-1zM14 11h1v1h-1zM0 12h15v1h-15z"/></svg><svg style="left:42px;top:145px" width="15" height="13"><path fill="#808080" d="M1 0h6v1h-6zM0 1h1v1h-1zM7 1h1v1h-1zM0 2h1v1h-1zM8 2h6v1h-6zM0 3h1v1h-1zM0 4h1v1h-1zM0 5h1v1h-1zM0 6h1v1h-1zM0 7h1v1h-1zM0 8h1v1h-1zM0 9h1v1h-1zM0 10h1v1h-1zM0 11h1v1h-1z"/><path fill="#FFFFFF" d="M1 1h6v1h-6zM1 2h1v1h-1zM3 2h1v1h-1zM5 2h1v1h-1zM7 2h1v1h-1zM1 3h2v1h-2zM4 3h1v1h-1zM6 3h1v1h-1zM8 3h1v1h-1zM10 3h1v1h-1zM12 3h1v1h-1zM1 4h1v1h-1zM3 4h1v1h-1zM5 4h1v1h-1zM7 4h1v1h-1zM9 4h1v1h-1zM11 4h1v1h-1zM13 4h1v1h-1zM1 5h2v1h-2zM4 5h1v1h-1zM6 5h1v1h-1zM8 5h1v1h-1zM10 5h1v1h-1zM12 5h1v1h-1zM1 6h1v1h-1zM3 6h1v1h-1zM5 6h1v1h-1zM7 6h1v1h-1zM9 6h1v1h-1zM11 6h1v1h-1zM13 6h1v1h-1zM1 7h2v1h-2zM4 7h1v1h-1zM6 7h1v1h-1zM8 7h1v1h-1zM10 7h1v1h-1zM12 7h1v1h-1zM1 8h1v1h-1zM3 8h1v1h-1zM5 8h1v1h-1zM7 8h1v1h-1zM9 8h1v1h-1zM11 8h1v1h-1zM13 8h1v1h-1zM1 9h2v1h-2zM4 9h1v1h-1zM6 9h1v1h-1zM8 9h1v1h-1zM10 9h1v1h-1zM12 9h1v1h-1zM1 10h1v1h-1zM3 10h1v1h-1zM5 10h1v1h-1zM7 10h1v1h-1zM9 10h1v1h-1zM11 10h1v1h-1zM13 10h1v1h-1zM1 11h13v1h-13z"/><path fill="#FFFF00" d="M2 2h1v1h-1zM4 2h1v1h-1zM6 2h1v1h-1zM3 3h1v1h-1zM5 3h1v1h-1zM7 3h1v1h-1zM9 3h1v1h-1zM11 3h1v1h-1zM13 3h1v1h-1zM2 4h1v1h-1zM4 4h1v1h-1zM6 4h1v1h-1zM8 4h1v1h-1zM10 4h1v1h-1zM12 4h1v1h-1zM3 5h1v1h-1zM5 5h1v1h-1zM7 5h1v1h-1zM9 5h1v1h-1zM11 5h1v1h-1zM13 5h1v1h-1zM2 6h1v1h-1zM4 6h1v1h-1zM6 6h1v1h-1zM8 6h1v1h-1zM10 6h1v1h-1zM12 6h1v1h-1zM3 7h1v1h-1zM5 7h1v1h-1zM7 7h1v1h-1zM9 7h1v1h-1zM11 7h1v1h-1zM13 7h1v1h-1zM2 8h1v1h-1zM4 8h1v1h-1zM6 8h1v1h-1zM8 8h1v1h-1zM10 8h1v1h-1zM12 8h1v1h-1zM3 9h1v1h-1zM5 9h1v1h-1zM7 9h1v1h-1zM9 9h1v1h-1zM11 9h1v1h-1zM13 9h1v1h-1zM2 10h1v1h-1zM4 10h1v1h-1zM6 10h1v1h-1zM8 10h1v1h-1zM10 10h1v1h-1zM12 10h1v1h-1z"/><path fill="#000000" d="M14 3h1v1h-1zM14 4h1v1h-1zM14 5h1v1h-1zM14 6h1v1h-1zM14 7h1v1h-1zM14 8h1v1h-1zM14 9h1v1h-1zM14 10h1v1h-1zM14 11h1v1h-1zM0 12h15v1h-15z"/></svg><svg style="left:59px;top:160px" width="17" height="16"><path fill="#C0C0C0" d="M5 0h9v1h-9zM5 1h1v1h-1zM13 1h1v1h-1zM5 2h1v1h-1zM13 2h1v1h-1zM5 3h1v1h-1zM13 3h1v1h-1zM5 4h1v1h-1zM13 4h1v1h-1zM13 5h1v1h-1zM13 6h1v1h-1zM7 7h8v1h-8zM7 8h8v1h-8zM7 9h7v1h-7zM4 11h1v1h-1zM5 12h1v1h-1z"/><path fill="#000000" d="M14 0h1v1h-1zM14 1h1v1h-1zM6 2h7v1h-7zM14 2h1v1h-1zM6 3h1v1h-1zM14 3h1v1h-1zM6 4h1v1h-1zM14 4h1v1h-1zM2 5h2v1h-2zM5 5h2v1h-2zM14 5h1v1h-1zM1 6h1v1h-1zM4 6h1v1h-1zM6 6h7v1h-7zM14 6h1v1h-1zM6 7h1v1h-1zM15 7h1v1h-1zM0 8h1v1h-1zM6 8h1v1h-1zM15 8h1v1h-1zM6 9h1v1h-1zM15 9h1v1h-1zM6 10h7v1h-7zM14 10h1v1h-1zM6 11h1v1h-1zM10 13h5v1h-5zM1 14h2v1h-2zM8 14h4v1h-4zM2 15h2v1h-2zM5 15h2v1h-2zM8 15h2v1h-2z"/><path fill="#FFFFFF" d="M6 1h7v1h-7zM2 6h2v1h-2zM5 6h1v1h-1zM2 7h4v1h-4zM1 8h4v1h-4zM5 10h1v1h-1zM5 11h1v1h-1z"/><path fill="#00FFFF" d="M7 3h1v1h-1z"/><path fill="#0000FF" d="M8 3h5v1h-5zM7 4h6v1h-6zM7 5h6v1h-6zM5 8h1v1h-1zM2 9h4v1h-4zM2 10h3v1h-3z"/><path fill="#808080" d="M14 9h1v1h-1zM13 10h1v1h-1z"/></svg><svg style="left:60px;top:176px" width="16" height="16"><path fill="#000000" d="M2 0h1v1h-1zM5 0h1v1h-1zM8 0h1v1h-1zM11 0h1v1h-1zM2 1h1v1h-1zM5 1h1v1h-1zM8 1h1v1h-1zM11 1h1v1h-1zM13 1h1v1h-1zM2 2h1v1h-1zM5 2h1v1h-1zM8 2h1v1h-1zM11 2h1v1h-1zM13 2h1v1h-1zM13 3h1v1h-1zM15 3h1v1h-1zM13 4h1v1h-1zM15 4h1v1h-1zM13 5h1v1h-1zM15 5h1v1h-1zM4 6h1v1h-1zM13 6h1v1h-1zM15 6h1v1h-1zM3 7h1v1h-1zM13 7h1v1h-1zM15 7h1v1h-1zM4 8h1v1h-1zM13 8h1v1h-1zM15 8h1v1h-1zM13 9h1v1h-1zM15 9h1v1h-1zM13 10h1v1h-1zM15 10h1v1h-1zM10 11h1v1h-1zM13 11h1v1h-1zM15 11h1v1h-1zM11 12h1v1h-1zM13 12h1v1h-1zM15 12h1v1h-1zM10 13h1v1h-1zM13 13h1v1h-1zM15 13h1v1h-1zM1 14h13v1h-13zM15 14h1v1h-1zM2 15h14v1h-14z"/><path fill="#C0C0C0" d="M1 1h1v1h-1zM3 1h2v1h-2zM6 1h2v1h-2zM9 1h2v1h-2zM12 1h1v1h-1zM1 2h1v1h-1zM1 3h1v1h-1zM1 4h1v1h-1zM1 5h1v1h-1zM1 6h1v1h-1zM1 7h1v1h-1zM1 8h1v1h-1zM1 9h1v1h-1zM1 10h1v1h-1zM1 11h1v1h-1zM1 12h1v1h-1zM1 13h1v1h-1z"/><path fill="#FFFFFF" d="M3 2h2v1h-2zM6 2h2v1h-2zM9 2h2v1h-2zM12 2h1v1h-1zM14 2h1v1h-1zM2 3h11v1h-11zM14 3h1v1h-1zM2 4h11v1h-11zM14 4h1v1h-1zM2 5h11v1h-11zM14 5h1v1h-1zM2 6h2v1h-2zM5 6h8v1h-8zM14 6h1v1h-1zM2 7h1v1h-1zM4 7h1v1h-1zM11 7h2v1h-2zM14 7h1v1h-1zM2 8h2v1h-2zM5 8h8v1h-8zM14 8h1v1h-1zM2 9h11v1h-11zM14 9h1v1h-1zM2 10h11v1h-11zM14 10h1v1h-1zM2 11h8v1h-8zM11 11h2v1h-2zM14 11h1v1h-1zM2 12h1v1h-1zM9 12h2v1h-2zM12 12h1v1h-1zM14 12h1v1h-1zM2 13h8v1h-8zM11 13h2v1h-2zM14 13h1v1h-1zM14 14h1v1h-1z"/><path fill="#0000FF" d="M5 7h6v1h-6zM3 12h6v1h-6z"/></svg><svg style="left:62px;top:192px" width="14" height="16"><path fill="#C0C0C0" d="M0 0h9v1h-9zM1 5h5v1h-5zM1 11h4v1h-4zM1 12h7v1h-7zM1 13h2v1h-2zM6 13h2v1h-2zM1 14h6v1h-6z"/><path fill="#808080" d="M0 1h1v1h-1zM0 2h1v1h-1zM0 3h1v1h-1zM0 4h6v1h-6zM0 5h1v1h-1zM0 6h1v1h-1zM0 7h1v1h-1zM0 8h5v1h-5zM0 9h1v1h-1zM0 10h1v1h-1zM0 11h1v1h-1zM0 12h1v1h-1zM0 13h1v1h-1zM0 14h1v1h-1z"/><path fill="#FFFFFF" d="M1 1h6v1h-6zM1 2h5v1h-5zM1 3h5v1h-5zM7 3h1v1h-1zM7 4h1v1h-1zM1 6h4v1h-4zM6 6h1v1h-1zM8 6h1v1h-1zM10 6h1v1h-1zM1 7h4v1h-4zM7 7h1v1h-1zM11 7h1v1h-1zM6 8h1v1h-1zM10 8h1v1h-1zM1 9h4v1h-4zM7 9h1v1h-1zM11 9h1v1h-1zM1 10h4v1h-4zM6 10h1v1h-1zM8 10h1v1h-1zM10 10h1v1h-1z"/><path fill="#808000" d="M7 1h5v1h-5zM6 2h2v1h-2zM11 2h2v1h-2zM6 3h1v1h-1zM11 3h2v1h-2zM6 4h1v1h-1zM11 4h1v1h-1zM6 5h7v1h-7zM5 6h1v1h-1zM12 6h1v1h-1zM5 7h1v1h-1zM12 7h1v1h-1zM5 8h1v1h-1zM12 8h1v1h-1zM5 9h1v1h-1zM12 9h1v1h-1zM5 10h1v1h-1zM12 10h1v1h-1zM5 11h8v1h-8z"/><path fill="#000000" d="M8 2h3v1h-3zM8 3h1v1h-1zM10 3h1v1h-1zM8 4h1v1h-1zM10 4h1v1h-1zM12 4h1v1h-1zM13 5h1v1h-1zM13 6h1v1h-1zM8 7h2v1h-2zM13 7h1v1h-1zM8 8h2v1h-2zM13 8h1v1h-1zM9 9h1v1h-1zM13 9h1v1h-1zM9 10h1v1h-1zM13 10h1v1h-1zM13 11h1v1h-1zM8 12h5v1h-5zM8 13h1v1h-1zM7 14h1v1h-1zM1 15h6v1h-6z"/><path fill="#FFFF00" d="M7 6h1v1h-1zM9 6h1v1h-1zM11 6h1v1h-1zM6 7h1v1h-1zM10 7h1v1h-1zM7 8h1v1h-1zM11 8h1v1h-1zM6 9h1v1h-1zM8 9h1v1h-1zM10 9h1v1h-1zM7 10h1v1h-1zM11 10h1v1h-1z"/><path fill="#FF0000" d="M3 13h3v1h-3z"/></svg><svg style="left:61px;top:209px" width="15" height="13"><path fill="#808080" d="M1 0h6v1h-6zM0 1h1v1h-1zM7 1h1v1h-1zM0 2h1v1h-1zM8 2h6v1h-6zM0 3h1v1h-1zM0 4h1v1h-1zM0 5h1v1h-1zM0 6h1v1h-1zM0 7h1v1h-1zM0 8h1v1h-1zM0 9h1v1h-1zM0 10h1v1h-1zM0 11h1v1h-1z"/><path fill="#FFFFFF" d="M1 1h6v1h-6zM1 2h1v1h-1zM3 2h1v1h-1zM5 2h1v1h-1zM7 2h1v1h-1zM1 3h2v1h-2zM4 3h1v1h-1zM6 3h1v1h-1zM8 3h1v1h-1zM10 3h1v1h-1zM12 3h1v1h-1zM1 4h1v1h-1zM3 4h1v1h-1zM5 4h1v1h-1zM7 4h1v1h-1zM9 4h1v1h-1zM11 4h1v1h-1zM13 4h1v1h-1zM1 5h2v1h-2zM4 5h1v1h-1zM6 5h1v1h-1zM8 5h1v1h-1zM10 5h1v1h-1zM12 5h1v1h-1zM1 6h1v1h-1zM3 6h1v1h-1zM5 6h1v1h-1zM7 6h1v1h-1zM9 6h1v1h-1zM11 6h1v1h-1zM13 6h1v1h-1zM1 7h2v1h-2zM4 7h1v1h-1zM6 7h1v1h-1zM8 7h1v1h-1zM10 7h1v1h-1zM12 7h1v1h-1zM1 8h1v1h-1zM3 8h1v1h-1zM5 8h1v1h-1zM7 8h1v1h-1zM9 8h1v1h-1zM11 8h1v1h-1zM13 8h1v1h-1zM1 9h2v1h-2zM4 9h1v1h-1zM6 9h1v1h-1zM8 9h1v1h-1zM10 9h1v1h-1zM12 9h1v1h-1zM1 10h1v1h-1zM3 10h1v1h-1zM5 10h1v1h-1zM7 10h1v1h-1zM9 10h1v1h-1zM11 10h1v1h-1zM13 10h1v1h-1zM1 11h13v1h-13z"/><path fill="#FFFF00" d="M2 2h1v1h-1zM4 2h1v1h-1zM6 2h1v1h-1zM3 3h1v1h-1zM5 3h1v1h-1zM7 3h1v1h-1zM9 3h1v1h-1zM11 3h1v1h-1zM13 3h1v1h-1zM2 4h1v1h-1zM4 4h1v1h-1zM6 4h1v1h-1zM8 4h1v1h-1zM10 4h1v1h-1zM12 4h1v1h-1zM3 5h1v1h-1zM5 5h1v1h-1zM7 5h1v1h-1zM9 5h1v1h-1zM11 5h1v1h-1zM13 5h1v1h-1zM2 6h1v1h-1zM4 6h1v1h-1zM6 6h1v1h-1zM8 6h1v1h-1zM10 6h1v1h-1zM12 6h1v1h-1zM3 7h1v1h-1zM5 7h1v1h-1zM7 7h1v1h-1zM9 7h1v1h-1zM11 7h1v1h-1zM13 7h1v1h-1zM2 8h1v1h-1zM4 8h1v1h-1zM6 8h1v1h-1zM8 8h1v1h-1zM10 8h1v1h-1zM12 8h1v1h-1zM3 9h1v1h-1zM5 9h1v1h-1zM7 9h1v1h-1zM9 9h1v1h-1zM11 9h1v1h-1zM13 9h1v1h-1zM2 10h1v1h-1zM4 10h1v1h-1zM6 10h1v1h-1zM8 10h1v1h-1zM10 10h1v1h-1zM12 10h1v1h-1z"/><path fill="#000000" d="M14 3h1v1h-1zM14 4h1v1h-1zM14 5h1v1h-1zM14 6h1v1h-1zM14 7h1v1h-1zM14 8h1v1h-1zM14 9h1v1h-1zM14 10h1v1h-1zM14 11h1v1h-1zM0 12h15v1h-15z"/></svg><svg style="left:59px;top:224px" width="18" height="15"><path fill="#808000" d="M3 0h5v1h-5zM2 1h1v1h-1zM8 1h1v1h-1zM2 2h1v1h-1zM11 2h5v1h-5zM2 3h1v1h-1zM2 8h1v1h-1zM2 9h1v1h-1zM2 10h1v1h-1z"/><path fill="#F0F0B0" d="M3 1h5v1h-5zM11 3h1v1h-1zM13 3h1v1h-1zM15 3h1v1h-1zM11 4h1v1h-1zM13 4h1v1h-1zM15 4h1v1h-1zM12 5h1v1h-1zM14 5h1v1h-1zM10 6h2v1h-2zM13 6h1v1h-1zM15 6h1v1h-1zM10 7h1v1h-1zM12 7h1v1h-1zM14 7h1v1h-1zM6 8h1v1h-1zM10 8h2v1h-2zM13 8h1v1h-1zM15 8h1v1h-1zM6 9h1v1h-1zM10 9h1v1h-1zM12 9h1v1h-1zM14 9h1v1h-1zM6 10h1v1h-1zM10 10h6v1h-6zM6 11h1v1h-1z"/><path fill="#FFFFFF" d="M3 2h1v1h-1zM5 2h1v1h-1zM4 3h1v1h-1zM6 3h1v1h-1zM3 4h1v1h-1zM5 4h1v1h-1zM7 4h1v1h-1zM1 5h2v1h-2zM6 5h1v1h-1zM1 6h1v1h-1zM5 6h1v1h-1zM1 7h1v1h-1zM4 7h1v1h-1zM9 7h1v1h-1zM3 8h1v1h-1zM9 8h1v1h-1zM3 9h1v1h-1zM9 9h1v1h-1zM3 10h1v1h-1zM9 10h1v1h-1zM3 11h1v1h-1zM9 11h1v1h-1zM3 12h1v1h-1zM9 12h1v1h-1zM3 13h1v1h-1zM9 13h1v1h-1z"/><path fill="#C0C0C0" d="M4 2h1v1h-1zM6 2h4v1h-4zM3 3h1v1h-1zM7 3h3v1h-3zM2 4h1v1h-1zM8 4h1v1h-1zM0 6h1v1h-1zM2 7h1v1h-1zM4 8h1v1h-1zM4 9h1v1h-1zM4 10h1v1h-1zM4 11h1v1h-1zM4 12h1v1h-1zM4 13h1v1h-1z"/><path fill="#000000" d="M5 3h1v1h-1zM10 3h1v1h-1zM16 3h1v1h-1zM4 4h1v1h-1zM6 4h1v1h-1zM9 4h2v1h-2zM16 4h1v1h-1zM3 5h1v1h-1zM5 5h1v1h-1zM7 5h2v1h-2zM10 5h1v1h-1zM16 5h1v1h-1zM2 6h1v1h-1zM4 6h1v1h-1zM6 6h1v1h-1zM8 6h1v1h-1zM16 6h1v1h-1zM3 7h1v1h-1zM5 7h1v1h-1zM7 7h1v1h-1zM16 7h1v1h-1zM5 8h1v1h-1zM7 8h1v1h-1zM16 8h1v1h-1zM5 9h1v1h-1zM7 9h1v1h-1zM16 9h1v1h-1zM5 10h1v1h-1zM7 10h1v1h-1zM16 10h1v1h-1zM5 11h1v1h-1zM7 11h1v1h-1zM10 11h7v1h-7zM5 12h1v1h-1zM7 12h1v1h-1zM10 12h1v1h-1zM5 13h1v1h-1zM7 13h1v1h-1zM10 13h1v1h-1zM4 14h1v1h-1zM8 14h2v1h-2z"/><path fill="#F8D0A0" d="M12 3h1v1h-1zM14 3h1v1h-1zM12 4h1v1h-1zM14 4h1v1h-1zM11 5h1v1h-1zM13 5h1v1h-1zM15 5h1v1h-1zM12 6h1v1h-1zM14 6h1v1h-1zM11 7h1v1h-1zM13 7h1v1h-1zM15 7h1v1h-1zM12 8h1v1h-1zM14 8h1v1h-1zM11 9h1v1h-1zM13 9h1v1h-1zM15 9h1v1h-1z"/><path fill="#FFFF00" d="M4 5h1v1h-1zM3 6h1v1h-1z"/><path fill="#FF0000" d="M8 7h1v1h-1zM8 8h1v1h-1zM8 9h1v1h-1zM8 10h1v1h-1zM8 11h1v1h-1zM8 12h1v1h-1zM8 13h1v1h-1z"/></svg><svg style="left:42px;top:241px" width="15" height="13"><path fill="#808080" d="M1 0h6v1h-6zM0 1h1v1h-1zM7 1h1v1h-1zM0 2h1v1h-1zM8 2h6v1h-6zM0 3h1v1h-1zM0 4h1v1h-1zM0 5h1v1h-1zM0 6h1v1h-1zM0 7h1v1h-1zM0 8h1v1h-1zM0 9h1v1h-1zM0 10h1v1h-1zM0 11h1v1h-1z"/><path fill="#FFFFFF" d="M1 1h6v1h-6zM1 2h1v1h-1zM3 2h1v1h-1zM5 2h1v1h-1zM7 2h1v1h-1zM1 3h2v1h-2zM4 3h1v1h-1zM6 3h1v1h-1zM8 3h1v1h-1zM10 3h1v1h-1zM12 3h1v1h-1zM1 4h1v1h-1zM3 4h1v1h-1zM5 4h1v1h-1zM7 4h1v1h-1zM9 4h1v1h-1zM11 4h1v1h-1zM13 4h1v1h-1zM1 5h2v1h-2zM4 5h1v1h-1zM6 5h1v1h-1zM8 5h1v1h-1zM10 5h1v1h-1zM12 5h1v1h-1zM1 6h1v1h-1zM3 6h1v1h-1zM5 6h1v1h-1zM7 6h1v1h-1zM9 6h1v1h-1zM11 6h1v1h-1zM13 6h1v1h-1zM1 7h2v1h-2zM4 7h1v1h-1zM6 7h1v1h-1zM8 7h1v1h-1zM10 7h1v1h-1zM12 7h1v1h-1zM1 8h1v1h-1zM3 8h1v1h-1zM5 8h1v1h-1zM7 8h1v1h-1zM9 8h1v1h-1zM11 8h1v1h-1zM13 8h1v1h-1zM1 9h2v1h-2zM4 9h1v1h-1zM6 9h1v1h-1zM8 9h1v1h-1zM10 9h1v1h-1zM12 9h1v1h-1zM1 10h1v1h-1zM3 10h1v1h-1zM5 10h1v1h-1zM7 10h1v1h-1zM9 10h1v1h-1zM11 10h1v1h-1zM13 10h1v1h-1zM1 11h13v1h-13z"/><path fill="#FFFF00" d="M2 2h1v1h-1zM4 2h1v1h-1zM6 2h1v1h-1zM3 3h1v1h-1zM5 3h1v1h-1zM7 3h1v1h-1zM9 3h1v1h-1zM11 3h1v1h-1zM13 3h1v1h-1zM2 4h1v1h-1zM4 4h1v1h-1zM6 4h1v1h-1zM8 4h1v1h-1zM10 4h1v1h-1zM12 4h1v1h-1zM3 5h1v1h-1zM5 5h1v1h-1zM7 5h1v1h-1zM9 5h1v1h-1zM11 5h1v1h-1zM13 5h1v1h-1zM2 6h1v1h-1zM4 6h1v1h-1zM6 6h1v1h-1zM8 6h1v1h-1zM10 6h1v1h-1zM12 6h1v1h-1zM3 7h1v1h-1zM5 7h1v1h-1zM7 7h1v1h-1zM9 7h1v1h-1zM11 7h1v1h-1zM13 7h1v1h-1zM2 8h1v1h-1zM4 8h1v1h-1zM6 8h1v1h-1zM8 8h1v1h-1zM10 8h1v1h-1zM12 8h1v1h-1zM3 9h1v1h-1zM5 9h1v1h-1zM7 9h1v1h-1zM9 9h1v1h-1zM11 9h1v1h-1zM13 9h1v1h-1zM2 10h1v1h-1zM4 10h1v1h-1zM6 10h1v1h-1zM8 10h1v1h-1zM10 10h1v1h-1zM12 10h1v1h-1z"/><path fill="#000000" d="M14 3h1v1h-1zM14 4h1v1h-1zM14 5h1v1h-1zM14 6h1v1h-1zM14 7h1v1h-1zM14 8h1v1h-1zM14 9h1v1h-1zM14 10h1v1h-1zM14 11h1v1h-1zM0 12h15v1h-15z"/></svg>
  <!-- lines -->
  <div class="vdots" style="left:11px;top:16px;height:112px"></div>
  <div class="box" style="left:7px;top:20px"></div><div class="dots" style="left:16px;top:24px;width:5px"></div>
  <div class="box" style="left:7px;top:116px"></div><div class="dots" style="left:16px;top:120px;width:5px"></div>
  <div class="vdots" style="left:30px;top:32px;height:72px"></div>
  <div class="box p" style="left:26px;top:36px"></div><div class="dots" style="left:35px;top:40px;width:5px"></div>
  <div class="box" style="left:26px;top:52px"></div><div class="dots" style="left:35px;top:56px;width:5px"></div>
  <div class="box p" style="left:26px;top:100px"></div><div class="dots" style="left:35px;top:104px;width:5px"></div>
  <div class="vdots" style="left:49px;top:64px;height:24px"></div>
  <div class="dots" style="left:50px;top:72px;width:9px"></div>
  <div class="box p" style="left:45px;top:84px"></div><div class="dots" style="left:54px;top:88px;width:5px"></div>
  <div class="vdots" style="left:30px;top:128px;height:120px"></div>
  <div class="box p" style="left:26px;top:132px"></div><div class="dots" style="left:35px;top:136px;width:5px"></div>
  <div class="box" style="left:26px;top:148px"></div><div class="dots" style="left:35px;top:152px;width:5px"></div>
  <div class="box p" style="left:26px;top:244px"></div><div class="dots" style="left:35px;top:248px;width:5px"></div>
  <div class="vdots" style="left:49px;top:160px;height:72px"></div>
  <div class="dots" style="left:50px;top:168px;width:9px"></div>
  <div class="dots" style="left:50px;top:184px;width:9px"></div>
  <div class="box p" style="left:45px;top:196px"></div><div class="dots" style="left:54px;top:200px;width:5px"></div>
  <div class="box p" style="left:45px;top:212px"></div><div class="dots" style="left:54px;top:216px;width:5px"></div>
  <div class="box p" style="left:45px;top:228px"></div><div class="dots" style="left:54px;top:232px;width:5px"></div>
</div>

<!-- ===== Logon Properties dialog ===== -->
<div class="a" style="left:279px;top:138px;width:402px;height:448px;background:#D4D0C8;box-shadow:inset 1px 1px #D4D0C8,inset 2px 2px #fff,inset 0 -1px #404040,inset 0 -2px #808080"></div>
<div class="a" style="left:282px;top:141px;width:398px;height:18px;background:#0A246A"></div>
<div class="t" style="left:284px;top:144px;color:#fff;font-weight:bold;letter-spacing:0.33px;-webkit-text-stroke:0.25px #fff">Logon Properties</div>
<div class="btn" style="left:644px;top:143px;width:16px;height:14px"></div><svg style="left:649px;top:145px" width="6" height="9"><path fill="#000000" d="M1 0h4v1h-4zM0 1h2v1h-2zM4 1h2v1h-2zM4 2h2v1h-2zM3 3h2v1h-2zM2 4h2v1h-2zM2 5h2v1h-2zM2 7h2v1h-2zM2 8h2v1h-2z"/></svg>
<div class="btn" style="left:662px;top:143px;width:16px;height:14px"></div><svg style="left:666px;top:146px" width="8" height="7"><path fill="#000000" d="M0 0h2v1h-2zM6 0h2v1h-2zM1 1h2v1h-2zM5 1h2v1h-2zM2 2h4v1h-4zM3 3h2v1h-2zM2 4h4v1h-4zM1 5h2v1h-2zM5 5h2v1h-2zM0 6h2v1h-2zM6 6h2v1h-2z"/></svg>

<!-- tab panel -->
<div class="a" style="left:288px;top:187px;width:386px;height:360px;box-shadow:inset 1px 1px #fff,inset -1px -1px #404040,inset -2px -2px #808080"></div>
<div class="a" style="left:288px;top:167px;width:48px;height:21px;background:#D4D0C8;box-shadow:inset 1px 1px #fff,inset -1px 0 #404040,inset -2px 0 #808080"></div>
<div class="t d" style="left:296px;top:171px">Scripts</div>

<svg style="left:305px;top:199px" width="29" height="35"><path fill="#000000" d="M3 1h1v1h-1zM6 1h1v1h-1zM9 1h1v1h-1zM12 1h1v1h-1zM15 1h1v1h-1zM18 1h1v1h-1zM21 1h1v1h-1zM24 1h1v1h-1zM3 2h1v1h-1zM6 2h1v1h-1zM9 2h1v1h-1zM12 2h1v1h-1zM15 2h1v1h-1zM18 2h1v1h-1zM21 2h1v1h-1zM24 2h1v1h-1zM3 3h1v1h-1zM6 3h1v1h-1zM9 3h1v1h-1zM12 3h1v1h-1zM15 3h1v1h-1zM18 3h1v1h-1zM21 3h1v1h-1zM24 3h1v1h-1zM25 4h2v1h-2zM25 5h1v1h-1zM27 5h1v1h-1zM25 6h1v1h-1zM27 6h1v1h-1zM6 7h1v1h-1zM20 7h1v1h-1zM25 7h1v1h-1zM27 7h1v1h-1zM4 8h2v1h-2zM21 8h2v1h-2zM25 8h1v1h-1zM27 8h1v1h-1zM3 9h1v1h-1zM23 9h1v1h-1zM25 9h1v1h-1zM27 9h1v1h-1zM4 10h2v1h-2zM21 10h2v1h-2zM25 10h1v1h-1zM27 10h1v1h-1zM6 11h1v1h-1zM20 11h1v1h-1zM25 11h1v1h-1zM27 11h1v1h-1zM25 12h1v1h-1zM27 12h1v1h-1zM25 13h1v1h-1zM27 13h1v1h-1zM6 14h1v1h-1zM11 14h1v1h-1zM25 14h1v1h-1zM27 14h1v1h-1zM4 15h2v1h-2zM12 15h2v1h-2zM25 15h1v1h-1zM27 15h1v1h-1zM3 16h1v1h-1zM14 16h1v1h-1zM25 16h1v1h-1zM27 16h1v1h-1zM4 17h2v1h-2zM12 17h2v1h-2zM25 17h1v1h-1zM27 17h1v1h-1zM6 18h1v1h-1zM11 18h1v1h-1zM25 18h1v1h-1zM27 18h1v1h-1zM25 19h1v1h-1zM27 19h1v1h-1zM4 20h20v1h-20zM25 20h1v1h-1zM27 20h1v1h-1zM25 21h1v1h-1zM27 21h1v1h-1zM4 22h10v1h-10zM25 22h1v1h-1zM27 22h1v1h-1zM25 23h1v1h-1zM27 23h1v1h-1zM6 24h1v1h-1zM20 24h1v1h-1zM25 24h1v1h-1zM27 24h1v1h-1zM4 25h2v1h-2zM21 25h2v1h-2zM25 25h1v1h-1zM27 25h1v1h-1zM3 26h1v1h-1zM23 26h1v1h-1zM25 26h1v1h-1zM27 26h1v1h-1zM4 27h2v1h-2zM21 27h2v1h-2zM25 27h1v1h-1zM27 27h1v1h-1zM6 28h1v1h-1zM20 28h1v1h-1zM25 28h1v1h-1zM27 28h1v1h-1zM25 29h1v1h-1zM27 29h1v1h-1zM25 30h1v1h-1zM27 30h1v1h-1zM25 31h1v1h-1zM27 31h1v1h-1zM2 32h26v1h-26zM3 33h25v1h-25z"/><path fill="#C0C0C0" d="M1 4h1v1h-1zM1 5h1v1h-1zM1 6h1v1h-1zM1 7h1v1h-1zM1 8h1v1h-1zM1 9h1v1h-1zM1 10h1v1h-1zM1 11h1v1h-1zM1 12h1v1h-1zM1 13h1v1h-1zM1 14h1v1h-1zM1 15h1v1h-1zM1 16h1v1h-1zM1 17h1v1h-1zM1 18h1v1h-1zM1 19h1v1h-1zM1 20h1v1h-1zM1 21h1v1h-1zM1 22h1v1h-1zM1 23h1v1h-1zM1 24h1v1h-1zM1 25h1v1h-1zM1 26h1v1h-1zM1 27h1v1h-1zM1 28h1v1h-1zM1 29h1v1h-1zM1 30h1v1h-1zM1 31h1v1h-1z"/><path fill="#FFFFFF" d="M2 4h23v1h-23zM2 5h23v1h-23zM26 5h1v1h-1zM2 6h23v1h-23zM26 6h1v1h-1zM2 7h4v1h-4zM7 7h13v1h-13zM21 7h4v1h-4zM26 7h1v1h-1zM2 8h2v1h-2zM6 8h15v1h-15zM23 8h2v1h-2zM26 8h1v1h-1zM2 9h1v1h-1zM4 9h5v1h-5zM19 9h4v1h-4zM24 9h1v1h-1zM26 9h1v1h-1zM2 10h2v1h-2zM6 10h3v1h-3zM19 10h2v1h-2zM23 10h2v1h-2zM26 10h1v1h-1zM2 11h4v1h-4zM7 11h13v1h-13zM21 11h4v1h-4zM26 11h1v1h-1zM2 12h23v1h-23zM26 12h1v1h-1zM2 13h23v1h-23zM26 13h1v1h-1zM2 14h4v1h-4zM7 14h4v1h-4zM12 14h13v1h-13zM26 14h1v1h-1zM2 15h2v1h-2zM6 15h2v1h-2zM9 15h3v1h-3zM14 15h11v1h-11zM26 15h1v1h-1zM2 16h1v1h-1zM4 16h4v1h-4zM9 16h5v1h-5zM15 16h1v1h-1zM24 16h1v1h-1zM26 16h1v1h-1zM2 17h2v1h-2zM6 17h2v1h-2zM9 17h3v1h-3zM14 17h2v1h-2zM24 17h1v1h-1zM26 17h1v1h-1zM2 18h4v1h-4zM7 18h4v1h-4zM12 18h13v1h-13zM26 18h1v1h-1zM2 19h23v1h-23zM26 19h1v1h-1zM2 20h2v1h-2zM24 20h1v1h-1zM26 20h1v1h-1zM2 21h23v1h-23zM26 21h1v1h-1zM2 22h2v1h-2zM14 22h11v1h-11zM26 22h1v1h-1zM2 23h23v1h-23zM26 23h1v1h-1zM2 24h4v1h-4zM7 24h13v1h-13zM21 24h4v1h-4zM26 24h1v1h-1zM2 25h2v1h-2zM6 25h15v1h-15zM23 25h2v1h-2zM26 25h1v1h-1zM2 26h1v1h-1zM4 26h4v1h-4zM19 26h4v1h-4zM24 26h1v1h-1zM26 26h1v1h-1zM2 27h2v1h-2zM6 27h2v1h-2zM19 27h2v1h-2zM23 27h2v1h-2zM26 27h1v1h-1zM2 28h4v1h-4zM7 28h13v1h-13zM21 28h4v1h-4zM26 28h1v1h-1zM2 29h23v1h-23zM26 29h1v1h-1zM2 30h23v1h-23zM26 30h1v1h-1zM2 31h23v1h-23zM26 31h1v1h-1z"/><path fill="#808000" d="M9 9h10v1h-10zM16 16h8v1h-8zM8 26h11v1h-11z"/><path fill="#0000FF" d="M9 10h10v1h-10zM8 15h1v1h-1zM8 16h1v1h-1zM8 17h1v1h-1zM16 17h8v1h-8zM8 27h11v1h-11z"/></svg>
<div class="t d" style="left:361px;top:210px">Logon Scripts for Enable OCS 2007 R2 QoS</div>
<div class="hl" style="left:303px;top:243px;width:357px"></div>
<div class="wl" style="left:303px;top:244px;width:357px"></div>

<!-- list -->
<div class="sunk" style="left:303px;top:259px;width:271px;height:175px;background:#fff"></div>
<div class="a" style="left:305px;top:261px;width:133px;height:16px;box-shadow:inset 1px 0 #fff,inset -1px -1px #808080;background:#D4D0C8"></div>
<div class="a" style="left:438px;top:261px;width:134px;height:16px;box-shadow:inset 1px 0 #fff,inset -1px -1px #808080;background:#D4D0C8"></div>
<div class="t d" style="left:311px;top:264px">Name</div>
<div class="t d" style="left:445px;top:264px">Parameters</div>
<div class="a" style="left:309px;top:278px;width:264px;height:14px;background:#D4D0C8"></div>
<div class="t d" style="left:311px;top:279px">Regedit.exe</div>
<div class="t d" style="left:445px;top:279px">/s QoS-OCS.reg</div>

<div class="btn dis" style="left:585px;top:278px;width:75px;height:23px"><span class="u">U</span>p</div>
<div class="btn dis" style="left:585px;top:301px;width:75px;height:23px">Do<span class="u">w</span>n</div>
<div class="btn" style="left:585px;top:353px;width:75px;height:23px">A<span class="u">d</span>d...</div>
<div class="btn" style="left:585px;top:382px;width:75px;height:23px"><span class="u">E</span>dit...</div>
<div class="btn" style="left:585px;top:412px;width:75px;height:23px"><span class="u">R</span>emove</div>

<div class="hl" style="left:303px;top:460px;width:357px"></div>
<div class="wl" style="left:303px;top:461px;width:357px"></div>
<div class="t d" style="left:303px;top:471px">To view the script files stored in this Group Policy Object, press</div>
<div class="t d" style="left:303px;top:484px">the button below.</div>

<div class="a" style="left:303px;top:506px;width:120px;height:23px;border:1px solid #000;background:#D4D0C8;box-shadow:inset -1px -1px #404040,inset 1px 1px #fff,inset -2px -2px #808080"></div>
<div class="a" style="left:307px;top:510px;width:112px;height:15px;border:1px dotted #000"></div>
<div class="t d" style="left:304px;top:512px;width:120px;text-align:center"><span class="u">S</span>how Files...</div>
<div class="a" style="left:292px;top:494px;width:141px;height:45px;border:1px solid #f00"></div>

<div class="btn" style="left:437px;top:553px;width:75px;height:23px">OK</div>
<div class="btn" style="left:518px;top:553px;width:75px;height:23px">Cancel</div>
<div class="btn" style="left:599px;top:553px;width:75px;height:23px"><span class="u">A</span>pply</div>

</body></html>
